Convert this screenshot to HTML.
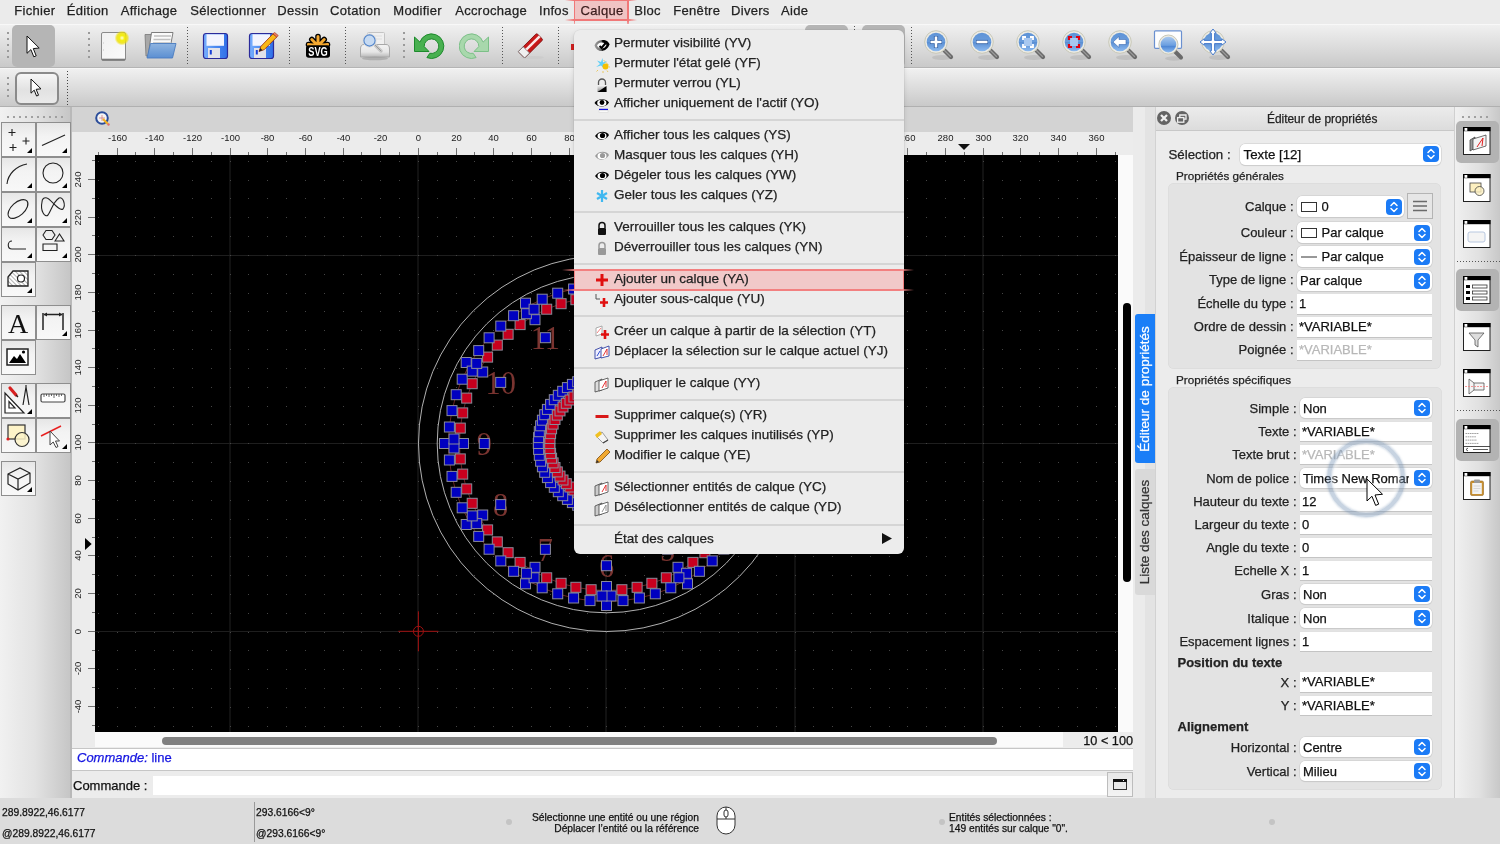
<!DOCTYPE html><html><head><meta charset="utf-8"><style>
*{margin:0;padding:0;box-sizing:border-box}
html,body{width:1500px;height:844px;overflow:hidden;background:#ececec;font-family:"Liberation Sans",sans-serif;color:#1e1e1e;-webkit-text-stroke-width:0.25px}
.a{position:absolute}
.t{position:absolute;white-space:nowrap;line-height:1}
.menubar span{position:absolute;top:3.3px;font-size:13px;line-height:15px;color:#222;letter-spacing:.3px}
.menubar span.hl{color:#3a1c1c}
.tb{background:linear-gradient(#f0f0f0,#d9d9d9 60%,#c9c9c9)}
.vdots{position:absolute;width:2px;background:repeating-linear-gradient(#9a9a9a 0 2px,transparent 2px 6px)}
.hdots{position:absolute;height:2px;background:repeating-linear-gradient(90deg,#a0a0a0 0 2px,transparent 2px 6px)}
.tbtn{position:absolute;width:34px;height:34px;border:1.5px solid #8e8e8e;background:linear-gradient(#e6e6e6,#f3f3f3 40%,#f8f8f8)}
.tbtn svg{position:absolute;left:0;top:0}
.tri{position:absolute;right:3px;bottom:3.5px;width:0;height:0;border-left:5px solid transparent;border-bottom:5px solid #000}
.lbl{position:absolute;font-size:13px;line-height:15px;text-align:right;white-space:nowrap;color:#222}
.fld{position:absolute;background:#fff;box-shadow:0 1px 0 #c4c4c4, 0 -0.5px 0 #e0e0e0;font-size:13px;line-height:19px;padding-left:2px;white-space:nowrap;overflow:hidden;color:#111}
.cmb{position:absolute;background:#fff;border-radius:5px;box-shadow:0 0 0 0.5px #c9c9c9,0 1px 1px rgba(0,0,0,.12);font-size:13px;line-height:21px;padding-left:5px;white-space:nowrap;overflow:hidden;color:#111}
.stp{position:absolute;right:2px;top:3px;width:16px;height:15px;border-radius:4px;background:#1a7cf5}
.stp svg{position:absolute;left:0;top:0}
.mi{position:absolute;left:40px;font-size:13.5px;line-height:16px;white-space:nowrap;color:#222}
.msep{position:absolute;left:0;width:330px;height:2px;background:#d6d6d6}
.mic{position:absolute;left:20px;width:16px;height:16px}
</style></head><body><div id="root" style="position:absolute;left:0;top:0;width:1500px;height:844px;will-change:transform;overflow:hidden">
<div class="a menubar" style="left:0;top:0;width:1500px;height:24px;background:#ebebeb">
<div class="a" style="left:574px;top:0;width:54px;height:20px;background:#f0c4c4"></div>
<span style="left:14.3px">Fichier</span>
<span style="left:66.7px">Édition</span>
<span style="left:120.7px">Affichage</span>
<span style="left:190.3px">Sélectionner</span>
<span style="left:277.3px">Dessin</span>
<span style="left:330px">Cotation</span>
<span style="left:393.3px">Modifier</span>
<span style="left:455.3px">Accrochage</span>
<span style="left:539px">Infos</span>
<span class="hl" style="left:580.5px">Calque</span>
<span style="left:634.3px">Bloc</span>
<span style="left:673.3px">Fenêtre</span>
<span style="left:731px">Divers</span>
<span style="left:781px">Aide</span>
</div>
<div class="a" style="left:565px;top:19px;width:72px;height:1.5px;background:linear-gradient(90deg,rgba(240,100,100,0),#f07878 12%,#f07878 88%,rgba(240,100,100,0))"></div>
<div class="a" style="left:565px;top:0;width:72px;height:1px;background:linear-gradient(90deg,rgba(240,100,100,0),#f07878 12%,#f07878 88%,rgba(240,100,100,0))"></div>
<div class="a" style="left:573.5px;top:0;width:1.5px;height:28px;background:linear-gradient(#f07878 75%,rgba(240,120,120,0))"></div>
<div class="a" style="left:627px;top:0;width:1.5px;height:28px;background:linear-gradient(#f07878 75%,rgba(240,120,120,0))"></div>
<div class="a tb" style="left:0;top:24px;width:1500px;height:44px;border-top:1px solid #f8f8f8;border-bottom:1px solid #b4b4b4"></div>
<div class="a tb" style="left:0;top:68px;width:1500px;height:39px;border-top:1px solid #f6f6f6;border-bottom:1px solid #b0b0b0"></div>
<div class="vdots" style="left:7px;top:32px;height:26px"></div>
<div class="a" style="left:12px;top:25px;width:43px;height:42px;border-radius:5px;background:#b5b5b5"></div>
<svg class="a" style="left:26px;top:34.5px" width="17" height="25"><g transform="translate(1,1) scale(1.0)"><path d="M0,0 L0,17.3 L3.9,13.6 L6.8,20.8 L9.2,19.8 L6.3,12.6 L12.2,12 Z" fill="#fff" stroke="#111" stroke-width="1.0" stroke-linejoin="round"/></g></svg>
<div class="vdots" style="left:88px;top:32px;height:26px"></div>
<svg class="a" style="left:98px;top:30px" width="32" height="32" viewBox="0 0 32 32"><defs><radialGradient id="glow"><stop offset="0" stop-color="#ffffe0"/><stop offset=".35" stop-color="#f4ee10"/><stop offset=".7" stop-color="#eee000" stop-opacity=".8"/><stop offset="1" stop-color="#f0e000" stop-opacity="0"/></radialGradient><linearGradient id="pg" x1="0" y1="0" x2="1" y2="1"><stop offset="0" stop-color="#f0f0f0"/><stop offset="1" stop-color="#fbfbfb"/></linearGradient></defs><rect x="3.5" y="2.5" width="24" height="28" rx="1.5" fill="url(#pg)" stroke="#8a8a8a" stroke-width="1"/><path d="M4,29.5 L27,29.5" stroke="#7a7a7a" stroke-width="1.6"/><path d="M5,13 L6,13 M5,20 L6,20" stroke="#bbb" stroke-width=".8"/><circle cx="24" cy="8" r="7.5" fill="url(#glow)"/></svg>
<svg class="a" style="left:142px;top:30px" width="36" height="32" viewBox="0 0 36 32"><defs><linearGradient id="fb" x1="0" y1="0" x2="0" y2="1"><stop offset="0" stop-color="#8fb4e0"/><stop offset="1" stop-color="#5b8fd2"/></linearGradient></defs><path d="M3,4.5 L10,4.5 L10,26 L4,26 Z" fill="#a8a8a8" stroke="#777" stroke-width=".8"/><path d="M9.5,2.5 L31,2.5 L28.5,16 L6,27 Z" fill="#fafafa" stroke="#707070" stroke-width=".9"/><path d="M12,6 L29,6 M11.5,9.5 L28.5,9.5 M11,13 L28,13" stroke="#c0c0c0" stroke-width="1.4"/><path d="M8.5,13.5 L34,13.5 L30.5,28 L5,28 Z" fill="url(#fb)" stroke="#4a7cc0" stroke-width=".9"/></svg>
<div class="vdots" style="left:187px;top:27px;height:38px;background:repeating-linear-gradient(#555 0 1px,transparent 1px 3px);width:1px"></div>
<svg class="a" style="left:202px;top:32px" width="33" height="30" viewBox="0 0 33 30"><defs><linearGradient id="fl" x1="0" y1="0" x2="1" y2="0"><stop offset="0" stop-color="#78b0ff"/><stop offset=".5" stop-color="#4a88f0"/><stop offset="1" stop-color="#3070e8"/></linearGradient></defs><rect x="1.5" y="1.5" width="24" height="25" rx="2.5" fill="url(#fl)" stroke="#2a2a9a" stroke-width="1.2"/><rect x="4.5" y="2.3" width="17.5" height="11.5" fill="#f2f4fe"/><rect x="6" y="16" width="12" height="10" fill="#e2e2ea"/><rect x="7.8" y="18" width="2" height="4.5" fill="#1a40d8"/></svg>
<svg class="a" style="left:248px;top:32px" width="33" height="30" viewBox="0 0 33 30"><defs><linearGradient id="fl" x1="0" y1="0" x2="1" y2="0"><stop offset="0" stop-color="#78b0ff"/><stop offset=".5" stop-color="#4a88f0"/><stop offset="1" stop-color="#3070e8"/></linearGradient></defs><rect x="1.5" y="1.5" width="24" height="25" rx="2.5" fill="url(#fl)" stroke="#2a2a9a" stroke-width="1.2"/><rect x="4.5" y="2.3" width="17.5" height="11.5" fill="#f2f4fe"/><rect x="6" y="16" width="12" height="10" fill="#e2e2ea"/><rect x="7.8" y="18" width="2" height="4.5" fill="#1a40d8"/><path d="M11,19.5 L12.8,14.5 L25,1.8 L28.8,5 L16.3,17.6 Z" fill="#f8b818" stroke="#9a2a10" stroke-width=".8"/><path d="M25,1.8 L26.6,0.4 L30.3,3.6 L28.8,5 Z" fill="#f08060" stroke="#9a2a10" stroke-width=".6"/><path d="M11,19.5 L12.3,16 L14.6,18.3 Z" fill="#222"/></svg>
<div class="vdots" style="left:289px;top:27px;height:38px;background:repeating-linear-gradient(#555 0 1px,transparent 1px 3px);width:1px"></div>
<svg class="a" style="left:304px;top:30px" width="30" height="30" viewBox="0 0 30 30"><path d="M14,16 L14,6.5 M14,16 L7.8,9.5 M14,16 L20.2,9.5 M14,16 L4.5,14.5 M14,16 L23.5,14.5" stroke="#000" stroke-width="5.6" stroke-linecap="round"/><path d="M14,16 L14,6.5 M14,16 L7.8,9.5 M14,16 L20.2,9.5 M14,16 L4.5,14.5 M14,16 L23.5,14.5" stroke="#f4a830" stroke-width="3" stroke-linecap="round"/><path d="M3,14.5 L25,14.5" stroke="#f4a830" stroke-width="1.5"/><rect x="2" y="15.2" width="24" height="12.6" rx="2.8" fill="#000"/><text transform="translate(14 26) scale(.74 1)" x="0" y="0" font-family="Liberation Sans" font-weight="bold" font-size="12.5" fill="#fff" text-anchor="middle">SVG</text></svg>
<div class="vdots" style="left:345px;top:27px;height:38px;background:repeating-linear-gradient(#555 0 1px,transparent 1px 3px);width:1px"></div>
<svg class="a" style="left:359px;top:30px" width="32" height="32" viewBox="0 0 32 32"><defs><linearGradient id="pr" x1="0" y1="0" x2="0" y2="1"><stop offset="0" stop-color="#f4f4f4"/><stop offset=".6" stop-color="#e6e6e6"/><stop offset="1" stop-color="#b8b8b8"/></linearGradient></defs><rect x="8.5" y="2.5" width="17" height="14" rx="1" fill="#f0f0f0" stroke="#c4c4c4" stroke-width="1"/><path d="M14,6 L23,6 M14,9 L23,9" stroke="#ddd" stroke-width="1.2"/><path d="M1.5,19 Q1.5,14.5 5,14.5 L27,14.5 Q30.5,14.5 30.5,19 L30.5,27 L1.5,27 Z" fill="url(#pr)" stroke="#a8a8a8" stroke-width="1"/><ellipse cx="16" cy="28.5" rx="13" ry="1.8" fill="#888" opacity=".45"/><path d="M15,14 L22,21" stroke="#c8c8c8" stroke-width="3.6" stroke-linecap="round"/><path d="M15,14 L22,21" stroke="#9a9a9a" stroke-width="1" stroke-linecap="round"/><circle cx="10.5" cy="10.5" r="6.6" fill="#f0f0f0" stroke="#ddd" stroke-width="1"/><circle cx="10.5" cy="10.5" r="5.6" fill="#c6daf2" stroke="#4f82c8" stroke-width="1.1"/></svg>
<div class="vdots" style="left:403px;top:32px;height:26px"></div>
<svg class="a" style="left:413px;top:31px" width="32" height="30" viewBox="0 0 32 30"><path d="M13.9,26.6 A12.3,12.3 0 1 0 6.9,11.1 L1.5,6 L1.5,20.5 L16,20.5 L11.2,15.6 A7.3,7.3 0 1 1 16.8,22.3 Z" fill="#48b050" stroke="#1d8a2c" stroke-width="1" stroke-linejoin="miter"/></svg>
<svg class="a" style="left:459px;top:31px" width="32" height="30" viewBox="0 0 32 30"><g transform="translate(31,0) scale(-1,1)"><path d="M13.9,26.6 A12.3,12.3 0 1 0 6.9,11.1 L1.5,6 L1.5,20.5 L16,20.5 L11.2,15.6 A7.3,7.3 0 1 1 16.8,22.3 Z" fill="#a8d8ac" stroke="#7cc088" stroke-width="1" stroke-linejoin="miter"/></g></svg>
<div class="vdots" style="left:502px;top:27px;height:38px;background:repeating-linear-gradient(#555 0 1px,transparent 1px 3px);width:1px"></div>
<svg class="a" style="left:515px;top:30px" width="32" height="32" viewBox="0 0 32 32"><ellipse cx="17" cy="27.5" rx="12" ry="1.6" fill="#ccc"/><g transform="rotate(-45 16 16)"><rect x="3" y="11" width="26" height="9" rx="1.5" fill="#c81818" stroke="#7a1010" stroke-width=".8"/><rect x="3" y="11" width="7" height="9" fill="#f0f0f0" stroke="#777" stroke-width=".8"/><rect x="10" y="14" width="19" height="2.5" fill="#fff" opacity=".9"/></g></svg>
<div class="vdots" style="left:558px;top:27px;height:38px;background:repeating-linear-gradient(#555 0 1px,transparent 1px 3px);width:1px"></div>
<div class="a" style="left:571px;top:44px;width:3px;height:6px;background:#d02020"></div>
<div class="a" style="left:805px;top:25px;width:43px;height:30px;border-radius:5px;background:#b5b5b5"></div>
<div class="a" style="left:862px;top:25px;width:43px;height:42px;border-radius:5px;background:#b5b5b5"></div>
<div class="a" style="left:854px;top:26px;width:1px;height:4px;background:repeating-linear-gradient(#555 0 1px,transparent 1px 3px)"></div>
<div class="vdots" style="left:911px;top:27px;height:38px;background:repeating-linear-gradient(#555 0 1px,transparent 1px 3px);width:1px"></div>
<svg class="a" style="left:920px;top:28px" width="36" height="34" viewBox="0 0 36 34"><defs><linearGradient id="bl" x1="0" y1="0" x2="0" y2="1"><stop offset="0" stop-color="#5e93d6"/><stop offset=".5" stop-color="#6a9ddc"/><stop offset=".52" stop-color="#5b8fd3"/><stop offset="1" stop-color="#8cbaf0"/></linearGradient></defs><ellipse cx="22" cy="29.5" rx="10" ry="2.5" fill="#999" opacity=".3"/><path d="M22.5,20.5 L31,29" stroke="#6a6a6a" stroke-width="4.2" stroke-linecap="round"/><path d="M23,21 L30.5,28.5" stroke="#9a9a9a" stroke-width="1.2" stroke-linecap="round"/><circle cx="16" cy="14" r="11.3" fill="#ecebe4" stroke="#c8c8b8" stroke-width="1"/><circle cx="16" cy="14" r="9.3" fill="url(#bl)"/><path d="M16,8 L16,20 M10,14 L22,14" stroke="#2a5aa0" stroke-width="4.2"/><path d="M16,8.5 L16,19.5 M10.5,14 L21.5,14" stroke="#fff" stroke-width="2.6"/></svg>
<svg class="a" style="left:966px;top:28px" width="36" height="34" viewBox="0 0 36 34"><defs><linearGradient id="bl" x1="0" y1="0" x2="0" y2="1"><stop offset="0" stop-color="#5e93d6"/><stop offset=".5" stop-color="#6a9ddc"/><stop offset=".52" stop-color="#5b8fd3"/><stop offset="1" stop-color="#8cbaf0"/></linearGradient></defs><ellipse cx="22" cy="29.5" rx="10" ry="2.5" fill="#999" opacity=".3"/><path d="M22.5,20.5 L31,29" stroke="#6a6a6a" stroke-width="4.2" stroke-linecap="round"/><path d="M23,21 L30.5,28.5" stroke="#9a9a9a" stroke-width="1.2" stroke-linecap="round"/><circle cx="16" cy="14" r="11.3" fill="#ecebe4" stroke="#c8c8b8" stroke-width="1"/><circle cx="16" cy="14" r="9.3" fill="url(#bl)"/><path d="M10,14 L22,14" stroke="#2a5aa0" stroke-width="4.2"/><path d="M10.5,14 L21.5,14" stroke="#fff" stroke-width="2.6"/></svg>
<svg class="a" style="left:1012px;top:28px" width="36" height="34" viewBox="0 0 36 34"><defs><linearGradient id="bl" x1="0" y1="0" x2="0" y2="1"><stop offset="0" stop-color="#5e93d6"/><stop offset=".5" stop-color="#6a9ddc"/><stop offset=".52" stop-color="#5b8fd3"/><stop offset="1" stop-color="#8cbaf0"/></linearGradient></defs><ellipse cx="22" cy="29.5" rx="10" ry="2.5" fill="#999" opacity=".3"/><path d="M22.5,20.5 L31,29" stroke="#6a6a6a" stroke-width="4.2" stroke-linecap="round"/><path d="M23,21 L30.5,28.5" stroke="#9a9a9a" stroke-width="1.2" stroke-linecap="round"/><circle cx="16" cy="14" r="11.3" fill="#ecebe4" stroke="#c8c8b8" stroke-width="1"/><circle cx="16" cy="14" r="9.3" fill="url(#bl)"/><rect x="12" y="10" width="8" height="8" fill="#a8c8f0"/><path d="M11,12 L11,9 L14,9 M18,9 L21,9 L21,12 M21,16 L21,19 L18,19 M14,19 L11,19 L11,16" stroke="#fff" stroke-width="1.8" fill="none"/></svg>
<svg class="a" style="left:1058px;top:28px" width="36" height="34" viewBox="0 0 36 34"><defs><linearGradient id="bl" x1="0" y1="0" x2="0" y2="1"><stop offset="0" stop-color="#5e93d6"/><stop offset=".5" stop-color="#6a9ddc"/><stop offset=".52" stop-color="#5b8fd3"/><stop offset="1" stop-color="#8cbaf0"/></linearGradient></defs><ellipse cx="22" cy="29.5" rx="10" ry="2.5" fill="#999" opacity=".3"/><path d="M22.5,20.5 L31,29" stroke="#6a6a6a" stroke-width="4.2" stroke-linecap="round"/><path d="M23,21 L30.5,28.5" stroke="#9a9a9a" stroke-width="1.2" stroke-linecap="round"/><circle cx="16" cy="14" r="11.3" fill="#ecebe4" stroke="#c8c8b8" stroke-width="1"/><circle cx="16" cy="14" r="9.3" fill="url(#bl)"/><rect x="12" y="10" width="8" height="8" fill="#a8c8f0"/><path d="M11,12 L11,9 L14,9 M18,9 L21,9 L21,12 M21,16 L21,19 L18,19 M14,19 L11,19 L11,16" stroke="#e00010" stroke-width="2.2" fill="none"/></svg>
<svg class="a" style="left:1104px;top:28px" width="36" height="34" viewBox="0 0 36 34"><defs><linearGradient id="bl" x1="0" y1="0" x2="0" y2="1"><stop offset="0" stop-color="#5e93d6"/><stop offset=".5" stop-color="#6a9ddc"/><stop offset=".52" stop-color="#5b8fd3"/><stop offset="1" stop-color="#8cbaf0"/></linearGradient></defs><ellipse cx="22" cy="29.5" rx="10" ry="2.5" fill="#999" opacity=".3"/><path d="M22.5,20.5 L31,29" stroke="#6a6a6a" stroke-width="4.2" stroke-linecap="round"/><path d="M23,21 L30.5,28.5" stroke="#9a9a9a" stroke-width="1.2" stroke-linecap="round"/><circle cx="16" cy="14" r="11.3" fill="#ecebe4" stroke="#c8c8b8" stroke-width="1"/><circle cx="16" cy="14" r="9.3" fill="url(#bl)"/><path d="M9,14 L15,8.5 L15,11.5 L22,11.5 L22,16.5 L15,16.5 L15,19.5 Z" fill="#fff" stroke="#3a6ab0" stroke-width=".6"/></svg>
<svg class="a" style="left:1152px;top:29px" width="34" height="34" viewBox="0 0 34 34"><defs><linearGradient id="bl2" x1="0" y1="0" x2="0" y2="1"><stop offset="0" stop-color="#a8c8ee"/><stop offset=".55" stop-color="#6a9ee0"/><stop offset=".6" stop-color="#4d86d4"/><stop offset="1" stop-color="#8cbaf0"/></linearGradient></defs><rect x="2.5" y="1.8" width="27" height="17.5" rx="1" fill="#fefefe" stroke="#6a90d0" stroke-width="1.2"/><ellipse cx="22" cy="29.5" rx="9" ry="2.2" fill="#999" opacity=".3"/><path d="M22,21.5 L29,28.5" stroke="#6a6a6a" stroke-width="4" stroke-linecap="round"/><circle cx="16.4" cy="15.6" r="9.6" fill="#ecebe4" stroke="#c8c8b8" stroke-width="1"/><circle cx="16.4" cy="15.6" r="7.8" fill="url(#bl2)"/></svg>
<svg class="a" style="left:1197px;top:28px" width="36" height="34" viewBox="0 0 36 34"><defs><linearGradient id="bl" x1="0" y1="0" x2="0" y2="1"><stop offset="0" stop-color="#5e93d6"/><stop offset=".5" stop-color="#6a9ddc"/><stop offset=".52" stop-color="#5b8fd3"/><stop offset="1" stop-color="#8cbaf0"/></linearGradient></defs><ellipse cx="22" cy="29.5" rx="10" ry="2.5" fill="#999" opacity=".3"/><path d="M22.5,20.5 L31,29" stroke="#6a6a6a" stroke-width="4.2" stroke-linecap="round"/><path d="M23,21 L30.5,28.5" stroke="#9a9a9a" stroke-width="1.2" stroke-linecap="round"/><circle cx="16" cy="14" r="11.3" fill="#ecebe4" stroke="#c8c8b8" stroke-width="1"/><circle cx="16" cy="14" r="9.3" fill="url(#bl)"/><path d="M16,1 L19.2,5.2 L17.6,5.2 L17.6,12.4 L24.8,12.4 L24.8,10.8 L29,14 L24.8,17.2 L24.8,15.6 L17.6,15.6 L17.6,22.8 L19.2,22.8 L16,27 L12.8,22.8 L14.4,22.8 L14.4,15.6 L7.2,15.6 L7.2,17.2 L3,14 L7.2,10.8 L7.2,12.4 L14.4,12.4 L14.4,5.2 L12.8,5.2 Z" fill="#fff" stroke="#3a72c8" stroke-width=".9" stroke-linejoin="miter"/></svg>
<div class="vdots" style="left:7px;top:77px;height:20px"></div>
<div class="a" style="left:14.5px;top:72px;width:44px;height:32.5px;border-radius:6px;border:2px solid #8a8a8a;background:linear-gradient(#f6f6f6,#e2e2e2 55%,#eaeaea)"></div>
<svg class="a" style="left:30px;top:78px" width="14" height="21"><g transform="translate(1,1) scale(0.82)"><path d="M0,0 L0,17.3 L3.9,13.6 L6.8,20.8 L9.2,19.8 L6.3,12.6 L12.2,12 Z" fill="#fff" stroke="#111" stroke-width="1.2195121951219512" stroke-linejoin="round"/></g></svg>
<div class="a" style="left:67px;top:71px;width:1px;height:34px;background:repeating-linear-gradient(#444 0 1px,transparent 1px 3px)"></div>
<div class="a" style="left:0;top:107px;width:70px;height:691px;background:linear-gradient(90deg,#f1f1f1,#e2e2e2 50%,#c6c6c6)"></div>
<div class="a" style="left:70px;top:107px;width:2px;height:691px;background:#b9b9b9"></div>
<div class="hdots" style="left:7px;top:116px;width:58px"></div>
<div class="tbtn" style="left:1px;top:122px;width:35px;height:35px"><svg width="32" height="32" viewBox="0 0 32 32"><path d="M10,6 L10,13 M6.5,9.5 L13.5,9.5 M24,14.5 L24,21.5 M20.5,18 L27.5,18 M11,21 L11,28 M7.5,24.5 L14.5,24.5" stroke="#222" stroke-width="1.1" fill="none"/></svg><div class="tri"></div></div>
<div class="tbtn" style="left:36px;top:122px;width:35px;height:35px"><svg width="32" height="32" viewBox="0 0 32 32"><path d="M5,22.5 L28,12" stroke="#222" stroke-width="1.1" fill="none"/></svg><div class="tri"></div></div>
<div class="tbtn" style="left:1px;top:157px;width:35px;height:35px"><svg width="32" height="32" viewBox="0 0 32 32"><path d="M5,26 C6,16 14,8 25,6" stroke="#222" stroke-width="1.1" fill="none"/></svg><div class="tri"></div></div>
<div class="tbtn" style="left:36px;top:157px;width:35px;height:35px"><svg width="32" height="32" viewBox="0 0 32 32"><circle cx="16" cy="15" r="10" stroke="#222" stroke-width="1.1" fill="none"/></svg><div class="tri"></div></div>
<div class="tbtn" style="left:1px;top:192px;width:35px;height:35px"><svg width="32" height="32" viewBox="0 0 32 32"><ellipse cx="16" cy="16" rx="12" ry="6.5" transform="rotate(-42 16 16)" stroke="#222" stroke-width="1.1" fill="none"/></svg><div class="tri"></div></div>
<div class="tbtn" style="left:36px;top:192px;width:35px;height:35px"><svg width="32" height="32" viewBox="0 0 32 32"><path d="M5,9 C3,18 8,25 11,22 C14,18 16,9 22,5 C26,3 29,12 26,16 C22,19 14,6 10,5 C7,4 5,6 5,9 Z" stroke="#222" stroke-width="1.1" fill="none"/></svg><div class="tri"></div></div>
<div class="tbtn" style="left:1px;top:227px;width:35px;height:35px"><svg width="32" height="32" viewBox="0 0 32 32"><path d="M10,13 C5,13 5,21 10,21 L24,21" stroke="#222" stroke-width="1.1" fill="none"/></svg><div class="tri"></div></div>
<div class="tbtn" style="left:36px;top:227px;width:35px;height:35px"><svg width="32" height="32" viewBox="0 0 32 32"><path d="M6,7 L9,2.5 L15,2.5 L18,7 L15,11.5 L9,11.5 Z M18,13 L22.5,6 L27,13 Z M6,16 L20,16 L20,22.5 L6,22.5 Z" stroke="#222" stroke-width="1.1" fill="none"/></svg><div class="tri"></div></div>
<div class="tbtn" style="left:1px;top:262px;width:35px;height:35px"><svg width="32" height="32" viewBox="0 0 32 32"><defs><pattern id="hat" width="3" height="3" patternUnits="userSpaceOnUse" patternTransform="rotate(-45)"><rect width="3" height="3" fill="#fff"/><path d="M0,0 L0,3" stroke="#666" stroke-width="1"/></pattern></defs><path d="M6,23 L6,14 L11,8 L26,8 L26,23 Z" fill="url(#hat)" stroke="#222" stroke-width="1.3"/><circle cx="19" cy="15.5" r="3.5" fill="#fff" stroke="#222" stroke-width="1.2"/></svg><div class="tri"></div></div>
<div class="tbtn" style="left:1px;top:305px;width:35px;height:35px"><svg width="32" height="32" viewBox="0 0 32 32"><text x="16" y="27" font-family="Liberation Serif" font-size="28" text-anchor="middle" fill="#111">A</text></svg></div>
<div class="tbtn" style="left:36px;top:305px;width:35px;height:35px"><svg width="32" height="32" viewBox="0 0 32 32"><path d="M6,7 L6,24 M26,7 L26,24 M7,8.5 L25,8.5" stroke="#222" stroke-width="1.5" fill="none"/><path d="M6.5,8.5 L10,6.5 L10,10.5Z M25.5,8.5 L22,6.5 L22,10.5Z" fill="#222"/></svg><div class="tri"></div></div>
<div class="tbtn" style="left:1px;top:340px;width:35px;height:35px"><svg width="32" height="32" viewBox="0 0 32 32"><rect x="5" y="8" width="21" height="16" fill="#fff" stroke="#222" stroke-width="1.5"/><path d="M7,22 L12,15 L15,18 L18,13 L24,22 Z" fill="#000"/><circle cx="21.5" cy="11" r="1.6" fill="#000"/></svg></div>
<div class="tbtn" style="left:1px;top:383px;width:35px;height:35px"><svg width="32" height="32" viewBox="0 0 32 32"><path d="M3,29 L3,9 L22,29 Z M7,24 L7,17.5 L13,24 Z" stroke="#222" stroke-width="1.2" fill="#fff"/><path d="M8,4 L14,11" stroke="#d82020" stroke-width="3.2" stroke-linecap="round"/><path d="M14,11 L16,13" stroke="#222" stroke-width="1.2"/><path d="M24,3 L21,21 M24,3 L27,21 M24,3 L24,1" stroke="#222" stroke-width="1.2" fill="none"/></svg><div class="tri"></div></div>
<div class="tbtn" style="left:36px;top:383px;width:35px;height:35px"><svg width="32" height="32" viewBox="0 0 32 32"><rect x="4" y="10" width="24" height="8" rx="1.5" fill="#fff" stroke="#444" stroke-width="1.2"/><path d="M7,10 L7,13 M9.5,10 L9.5,12 M12,10 L12,13 M14.5,10 L14.5,12 M17,10 L17,14 M19.5,10 L19.5,12 M22,10 L22,13 M24.5,10 L24.5,12" stroke="#444" stroke-width=".8"/></svg></div>
<div class="tbtn" style="left:1px;top:418px;width:35px;height:35px"><svg width="32" height="32" viewBox="0 0 32 32"><rect x="6" y="6" width="17" height="14" fill="#fdf3c8" stroke="#333" stroke-width="1.2"/><circle cx="20" cy="20.5" r="7" fill="#fdf3c8" fill-opacity=".85" stroke="#333" stroke-width="1.2"/><circle cx="6" cy="20" r="1.6" fill="#e02020"/></svg></div>
<div class="tbtn" style="left:36px;top:418px;width:35px;height:35px"><svg width="32" height="32" viewBox="0 0 32 32"><path d="M4,17 L24,7" stroke="#e82020" stroke-width="1.4"/><path d="M13,12 L13,26 L16.2,23 L19,28.5 L21,27.5 L18.5,22 L22.5,22 Z" fill="#fff" stroke="#444" stroke-width="1"/></svg><div class="tri"></div></div>
<div class="tbtn" style="left:1px;top:461px;width:35px;height:35px"><svg width="32" height="32" viewBox="0 0 32 32"><path d="M6,12 L18,6 L28,11 L28,21 L16,28 L6,22 Z M6,12 L16,17 L28,11 M16,17 L16,28" stroke="#222" stroke-width="1.2" fill="none"/></svg><div class="tri"></div></div>
<div class="a" style="left:72px;top:107px;width:1062px;height:24.5px;background:#d3d3d3"></div>
<svg class="a" style="left:95px;top:111px" width="16" height="16" viewBox="0 0 16 16"><circle cx="7" cy="7" r="5.8" fill="#f4f4f4" stroke="#2b4d9a" stroke-width="2"/><path d="M4,7 L10,7 M7,4 L7,10" stroke="#d07070" stroke-width=".7"/><path d="M8,8 L13,13" stroke="#f0b020" stroke-width="2.2"/><circle cx="13.5" cy="13.5" r="1.2" fill="#e07070"/></svg>
<div class="a" style="left:72px;top:131.5px;width:1061px;height:23.5px;background:#ececec"></div>
<div class="a" style="left:72px;top:155px;width:23px;height:577px;background:#ececec"></div>
<svg class="a" style="left:95px;top:131px" width="1023" height="24" viewBox="0 0 1023 24"><path d="M3.50,21 L3.50,24" stroke="#707070" stroke-width="1"/><path d="M22.50,17 L22.50,24" stroke="#707070" stroke-width="1"/><text x="22.50" y="10" font-family="Liberation Sans" font-size="9.5" text-anchor="middle" fill="#222">-160</text><path d="M40.50,21 L40.50,24" stroke="#707070" stroke-width="1"/><path d="M59.50,17 L59.50,24" stroke="#707070" stroke-width="1"/><text x="59.50" y="10" font-family="Liberation Sans" font-size="9.5" text-anchor="middle" fill="#222">-140</text><path d="M78.50,21 L78.50,24" stroke="#707070" stroke-width="1"/><path d="M97.50,17 L97.50,24" stroke="#707070" stroke-width="1"/><text x="97.50" y="10" font-family="Liberation Sans" font-size="9.5" text-anchor="middle" fill="#222">-120</text><path d="M116.50,21 L116.50,24" stroke="#707070" stroke-width="1"/><path d="M135.50,17 L135.50,24" stroke="#707070" stroke-width="1"/><text x="135.50" y="10" font-family="Liberation Sans" font-size="9.5" text-anchor="middle" fill="#222">-100</text><path d="M153.50,21 L153.50,24" stroke="#707070" stroke-width="1"/><path d="M172.50,17 L172.50,24" stroke="#707070" stroke-width="1"/><text x="172.50" y="10" font-family="Liberation Sans" font-size="9.5" text-anchor="middle" fill="#222">-80</text><path d="M191.50,21 L191.50,24" stroke="#707070" stroke-width="1"/><path d="M210.50,17 L210.50,24" stroke="#707070" stroke-width="1"/><text x="210.50" y="10" font-family="Liberation Sans" font-size="9.5" text-anchor="middle" fill="#222">-60</text><path d="M229.50,21 L229.50,24" stroke="#707070" stroke-width="1"/><path d="M248.50,17 L248.50,24" stroke="#707070" stroke-width="1"/><text x="248.50" y="10" font-family="Liberation Sans" font-size="9.5" text-anchor="middle" fill="#222">-40</text><path d="M266.50,21 L266.50,24" stroke="#707070" stroke-width="1"/><path d="M285.50,17 L285.50,24" stroke="#707070" stroke-width="1"/><text x="285.50" y="10" font-family="Liberation Sans" font-size="9.5" text-anchor="middle" fill="#222">-20</text><path d="M304.50,21 L304.50,24" stroke="#707070" stroke-width="1"/><path d="M323.50,17 L323.50,24" stroke="#707070" stroke-width="1"/><text x="323.50" y="10" font-family="Liberation Sans" font-size="9.5" text-anchor="middle" fill="#222">0</text><path d="M342.50,21 L342.50,24" stroke="#707070" stroke-width="1"/><path d="M361.50,17 L361.50,24" stroke="#707070" stroke-width="1"/><text x="361.50" y="10" font-family="Liberation Sans" font-size="9.5" text-anchor="middle" fill="#222">20</text><path d="M379.50,21 L379.50,24" stroke="#707070" stroke-width="1"/><path d="M398.50,17 L398.50,24" stroke="#707070" stroke-width="1"/><text x="398.50" y="10" font-family="Liberation Sans" font-size="9.5" text-anchor="middle" fill="#222">40</text><path d="M417.50,21 L417.50,24" stroke="#707070" stroke-width="1"/><path d="M436.50,17 L436.50,24" stroke="#707070" stroke-width="1"/><text x="436.50" y="10" font-family="Liberation Sans" font-size="9.5" text-anchor="middle" fill="#222">60</text><path d="M455.50,21 L455.50,24" stroke="#707070" stroke-width="1"/><path d="M474.50,17 L474.50,24" stroke="#707070" stroke-width="1"/><text x="474.50" y="10" font-family="Liberation Sans" font-size="9.5" text-anchor="middle" fill="#222">80</text><path d="M492.50,21 L492.50,24" stroke="#707070" stroke-width="1"/><path d="M511.50,17 L511.50,24" stroke="#707070" stroke-width="1"/><text x="511.50" y="10" font-family="Liberation Sans" font-size="9.5" text-anchor="middle" fill="#222">100</text><path d="M530.50,21 L530.50,24" stroke="#707070" stroke-width="1"/><path d="M549.50,17 L549.50,24" stroke="#707070" stroke-width="1"/><text x="549.50" y="10" font-family="Liberation Sans" font-size="9.5" text-anchor="middle" fill="#222">120</text><path d="M568.50,21 L568.50,24" stroke="#707070" stroke-width="1"/><path d="M587.50,17 L587.50,24" stroke="#707070" stroke-width="1"/><text x="587.50" y="10" font-family="Liberation Sans" font-size="9.5" text-anchor="middle" fill="#222">140</text><path d="M605.50,21 L605.50,24" stroke="#707070" stroke-width="1"/><path d="M624.50,17 L624.50,24" stroke="#707070" stroke-width="1"/><text x="624.50" y="10" font-family="Liberation Sans" font-size="9.5" text-anchor="middle" fill="#222">160</text><path d="M643.50,21 L643.50,24" stroke="#707070" stroke-width="1"/><path d="M662.50,17 L662.50,24" stroke="#707070" stroke-width="1"/><text x="662.50" y="10" font-family="Liberation Sans" font-size="9.5" text-anchor="middle" fill="#222">180</text><path d="M681.50,21 L681.50,24" stroke="#707070" stroke-width="1"/><path d="M700.50,17 L700.50,24" stroke="#707070" stroke-width="1"/><text x="700.50" y="10" font-family="Liberation Sans" font-size="9.5" text-anchor="middle" fill="#222">200</text><path d="M718.50,21 L718.50,24" stroke="#707070" stroke-width="1"/><path d="M737.50,17 L737.50,24" stroke="#707070" stroke-width="1"/><text x="737.50" y="10" font-family="Liberation Sans" font-size="9.5" text-anchor="middle" fill="#222">220</text><path d="M756.50,21 L756.50,24" stroke="#707070" stroke-width="1"/><path d="M775.50,17 L775.50,24" stroke="#707070" stroke-width="1"/><text x="775.50" y="10" font-family="Liberation Sans" font-size="9.5" text-anchor="middle" fill="#222">240</text><path d="M794.50,21 L794.50,24" stroke="#707070" stroke-width="1"/><path d="M812.50,17 L812.50,24" stroke="#707070" stroke-width="1"/><text x="812.50" y="10" font-family="Liberation Sans" font-size="9.5" text-anchor="middle" fill="#222">260</text><path d="M831.50,21 L831.50,24" stroke="#707070" stroke-width="1"/><path d="M850.50,17 L850.50,24" stroke="#707070" stroke-width="1"/><text x="850.50" y="10" font-family="Liberation Sans" font-size="9.5" text-anchor="middle" fill="#222">280</text><path d="M869.50,21 L869.50,24" stroke="#707070" stroke-width="1"/><path d="M888.50,17 L888.50,24" stroke="#707070" stroke-width="1"/><text x="888.50" y="10" font-family="Liberation Sans" font-size="9.5" text-anchor="middle" fill="#222">300</text><path d="M907.50,21 L907.50,24" stroke="#707070" stroke-width="1"/><path d="M925.50,17 L925.50,24" stroke="#707070" stroke-width="1"/><text x="925.50" y="10" font-family="Liberation Sans" font-size="9.5" text-anchor="middle" fill="#222">320</text><path d="M944.50,21 L944.50,24" stroke="#707070" stroke-width="1"/><path d="M963.50,17 L963.50,24" stroke="#707070" stroke-width="1"/><text x="963.50" y="10" font-family="Liberation Sans" font-size="9.5" text-anchor="middle" fill="#222">340</text><path d="M982.50,21 L982.50,24" stroke="#707070" stroke-width="1"/><path d="M1001.50,17 L1001.50,24" stroke="#707070" stroke-width="1"/><text x="1001.50" y="10" font-family="Liberation Sans" font-size="9.5" text-anchor="middle" fill="#222">360</text><path d="M1020.50,21 L1020.50,24" stroke="#707070" stroke-width="1"/></svg>
<svg class="a" style="left:958px;top:144px" width="12" height="7"><path d="M0,0 L12,0 L6,6 Z" fill="#111"/></svg>
<svg class="a" style="left:72px;top:155px" width="23" height="577" viewBox="0 0 23 577"><path d="M20,570.50 L23,570.50" stroke="#707070" stroke-width="1"/><path d="M16,551.50 L23,551.50" stroke="#707070" stroke-width="1"/><text transform="translate(8.7 551.50) rotate(-90)" x="0" y="0" font-family="Liberation Sans" font-size="9.5" text-anchor="middle" fill="#222">-40</text><path d="M20,532.50 L23,532.50" stroke="#707070" stroke-width="1"/><path d="M16,513.50 L23,513.50" stroke="#707070" stroke-width="1"/><text transform="translate(8.7 513.50) rotate(-90)" x="0" y="0" font-family="Liberation Sans" font-size="9.5" text-anchor="middle" fill="#222">-20</text><path d="M20,495.50 L23,495.50" stroke="#707070" stroke-width="1"/><path d="M16,476.50 L23,476.50" stroke="#707070" stroke-width="1"/><text transform="translate(8.7 476.50) rotate(-90)" x="0" y="0" font-family="Liberation Sans" font-size="9.5" text-anchor="middle" fill="#222">0</text><path d="M20,457.50 L23,457.50" stroke="#707070" stroke-width="1"/><path d="M16,438.50 L23,438.50" stroke="#707070" stroke-width="1"/><text transform="translate(8.7 438.50) rotate(-90)" x="0" y="0" font-family="Liberation Sans" font-size="9.5" text-anchor="middle" fill="#222">20</text><path d="M20,419.50 L23,419.50" stroke="#707070" stroke-width="1"/><path d="M16,400.50 L23,400.50" stroke="#707070" stroke-width="1"/><text transform="translate(8.7 400.50) rotate(-90)" x="0" y="0" font-family="Liberation Sans" font-size="9.5" text-anchor="middle" fill="#222">40</text><path d="M20,382.50 L23,382.50" stroke="#707070" stroke-width="1"/><path d="M16,363.50 L23,363.50" stroke="#707070" stroke-width="1"/><text transform="translate(8.7 363.50) rotate(-90)" x="0" y="0" font-family="Liberation Sans" font-size="9.5" text-anchor="middle" fill="#222">60</text><path d="M20,344.50 L23,344.50" stroke="#707070" stroke-width="1"/><path d="M16,325.50 L23,325.50" stroke="#707070" stroke-width="1"/><text transform="translate(8.7 325.50) rotate(-90)" x="0" y="0" font-family="Liberation Sans" font-size="9.5" text-anchor="middle" fill="#222">80</text><path d="M20,306.50 L23,306.50" stroke="#707070" stroke-width="1"/><path d="M16,287.50 L23,287.50" stroke="#707070" stroke-width="1"/><text transform="translate(8.7 287.50) rotate(-90)" x="0" y="0" font-family="Liberation Sans" font-size="9.5" text-anchor="middle" fill="#222">100</text><path d="M20,269.50 L23,269.50" stroke="#707070" stroke-width="1"/><path d="M16,250.50 L23,250.50" stroke="#707070" stroke-width="1"/><text transform="translate(8.7 250.50) rotate(-90)" x="0" y="0" font-family="Liberation Sans" font-size="9.5" text-anchor="middle" fill="#222">120</text><path d="M20,231.50 L23,231.50" stroke="#707070" stroke-width="1"/><path d="M16,212.50 L23,212.50" stroke="#707070" stroke-width="1"/><text transform="translate(8.7 212.50) rotate(-90)" x="0" y="0" font-family="Liberation Sans" font-size="9.5" text-anchor="middle" fill="#222">140</text><path d="M20,193.50 L23,193.50" stroke="#707070" stroke-width="1"/><path d="M16,175.50 L23,175.50" stroke="#707070" stroke-width="1"/><text transform="translate(8.7 175.50) rotate(-90)" x="0" y="0" font-family="Liberation Sans" font-size="9.5" text-anchor="middle" fill="#222">160</text><path d="M20,156.50 L23,156.50" stroke="#707070" stroke-width="1"/><path d="M16,137.50 L23,137.50" stroke="#707070" stroke-width="1"/><text transform="translate(8.7 137.50) rotate(-90)" x="0" y="0" font-family="Liberation Sans" font-size="9.5" text-anchor="middle" fill="#222">180</text><path d="M20,118.50 L23,118.50" stroke="#707070" stroke-width="1"/><path d="M16,99.50 L23,99.50" stroke="#707070" stroke-width="1"/><text transform="translate(8.7 99.50) rotate(-90)" x="0" y="0" font-family="Liberation Sans" font-size="9.5" text-anchor="middle" fill="#222">200</text><path d="M20,80.50 L23,80.50" stroke="#707070" stroke-width="1"/><path d="M16,62.50 L23,62.50" stroke="#707070" stroke-width="1"/><text transform="translate(8.7 62.50) rotate(-90)" x="0" y="0" font-family="Liberation Sans" font-size="9.5" text-anchor="middle" fill="#222">220</text><path d="M20,43.50 L23,43.50" stroke="#707070" stroke-width="1"/><path d="M16,24.50 L23,24.50" stroke="#707070" stroke-width="1"/><text transform="translate(8.7 24.50) rotate(-90)" x="0" y="0" font-family="Liberation Sans" font-size="9.5" text-anchor="middle" fill="#222">240</text><path d="M20,5.50 L23,5.50" stroke="#707070" stroke-width="1"/></svg>
<svg class="a" style="left:84.5px;top:537.8px" width="8" height="13"><path d="M0,0 L6.7,6.05 L0,12.1 Z" fill="#000"/></svg>
<svg class="a" style="left:95px;top:155px" width="1023" height="577" viewBox="0 0 1023 577"><rect width="1023" height="577" fill="#000"/><path d="M135.00,0 L135.00,577" stroke="#111" stroke-width="2"/><path d="M323.00,0 L323.00,577" stroke="#111" stroke-width="2"/><path d="M511.00,0 L511.00,577" stroke="#111" stroke-width="2"/><path d="M700.00,0 L700.00,577" stroke="#111" stroke-width="2"/><path d="M888.00,0 L888.00,577" stroke="#111" stroke-width="2"/><path d="M0,476.50 L1023,476.50" stroke="#1e1e1e" stroke-width="1"/><path d="M0,288.50 L1023,288.50" stroke="#1e1e1e" stroke-width="1"/><path d="M0,100.50 L1023,100.50" stroke="#1e1e1e" stroke-width="1"/><path d="M3.0,571.0h1v1h-1zM3.0,552.0h1v1h-1zM3.0,533.0h1v1h-1zM3.0,514.0h1v1h-1zM3.0,495.0h1v1h-1zM3.0,477.0h1v1h-1zM3.0,458.0h1v1h-1zM3.0,439.0h1v1h-1zM3.0,420.0h1v1h-1zM3.0,401.0h1v1h-1zM3.0,382.0h1v1h-1zM3.0,364.0h1v1h-1zM3.0,345.0h1v1h-1zM3.0,326.0h1v1h-1zM3.0,307.0h1v1h-1zM3.0,288.0h1v1h-1zM3.0,269.0h1v1h-1zM3.0,251.0h1v1h-1zM3.0,232.0h1v1h-1zM3.0,213.0h1v1h-1zM3.0,194.0h1v1h-1zM3.0,175.0h1v1h-1zM3.0,156.0h1v1h-1zM3.0,138.0h1v1h-1zM3.0,119.0h1v1h-1zM3.0,100.0h1v1h-1zM3.0,81.0h1v1h-1zM3.0,62.0h1v1h-1zM3.0,43.0h1v1h-1zM3.0,25.0h1v1h-1zM3.0,6.0h1v1h-1zM22.0,571.0h1v1h-1zM22.0,552.0h1v1h-1zM22.0,533.0h1v1h-1zM22.0,514.0h1v1h-1zM22.0,495.0h1v1h-1zM22.0,477.0h1v1h-1zM22.0,458.0h1v1h-1zM22.0,439.0h1v1h-1zM22.0,420.0h1v1h-1zM22.0,401.0h1v1h-1zM22.0,382.0h1v1h-1zM22.0,364.0h1v1h-1zM22.0,345.0h1v1h-1zM22.0,326.0h1v1h-1zM22.0,307.0h1v1h-1zM22.0,288.0h1v1h-1zM22.0,269.0h1v1h-1zM22.0,251.0h1v1h-1zM22.0,232.0h1v1h-1zM22.0,213.0h1v1h-1zM22.0,194.0h1v1h-1zM22.0,175.0h1v1h-1zM22.0,156.0h1v1h-1zM22.0,138.0h1v1h-1zM22.0,119.0h1v1h-1zM22.0,100.0h1v1h-1zM22.0,81.0h1v1h-1zM22.0,62.0h1v1h-1zM22.0,43.0h1v1h-1zM22.0,25.0h1v1h-1zM22.0,6.0h1v1h-1zM40.0,571.0h1v1h-1zM40.0,552.0h1v1h-1zM40.0,533.0h1v1h-1zM40.0,514.0h1v1h-1zM40.0,495.0h1v1h-1zM40.0,477.0h1v1h-1zM40.0,458.0h1v1h-1zM40.0,439.0h1v1h-1zM40.0,420.0h1v1h-1zM40.0,401.0h1v1h-1zM40.0,382.0h1v1h-1zM40.0,364.0h1v1h-1zM40.0,345.0h1v1h-1zM40.0,326.0h1v1h-1zM40.0,307.0h1v1h-1zM40.0,288.0h1v1h-1zM40.0,269.0h1v1h-1zM40.0,251.0h1v1h-1zM40.0,232.0h1v1h-1zM40.0,213.0h1v1h-1zM40.0,194.0h1v1h-1zM40.0,175.0h1v1h-1zM40.0,156.0h1v1h-1zM40.0,138.0h1v1h-1zM40.0,119.0h1v1h-1zM40.0,100.0h1v1h-1zM40.0,81.0h1v1h-1zM40.0,62.0h1v1h-1zM40.0,43.0h1v1h-1zM40.0,25.0h1v1h-1zM40.0,6.0h1v1h-1zM59.0,571.0h1v1h-1zM59.0,552.0h1v1h-1zM59.0,533.0h1v1h-1zM59.0,514.0h1v1h-1zM59.0,495.0h1v1h-1zM59.0,477.0h1v1h-1zM59.0,458.0h1v1h-1zM59.0,439.0h1v1h-1zM59.0,420.0h1v1h-1zM59.0,401.0h1v1h-1zM59.0,382.0h1v1h-1zM59.0,364.0h1v1h-1zM59.0,345.0h1v1h-1zM59.0,326.0h1v1h-1zM59.0,307.0h1v1h-1zM59.0,288.0h1v1h-1zM59.0,269.0h1v1h-1zM59.0,251.0h1v1h-1zM59.0,232.0h1v1h-1zM59.0,213.0h1v1h-1zM59.0,194.0h1v1h-1zM59.0,175.0h1v1h-1zM59.0,156.0h1v1h-1zM59.0,138.0h1v1h-1zM59.0,119.0h1v1h-1zM59.0,100.0h1v1h-1zM59.0,81.0h1v1h-1zM59.0,62.0h1v1h-1zM59.0,43.0h1v1h-1zM59.0,25.0h1v1h-1zM59.0,6.0h1v1h-1zM78.0,571.0h1v1h-1zM78.0,552.0h1v1h-1zM78.0,533.0h1v1h-1zM78.0,514.0h1v1h-1zM78.0,495.0h1v1h-1zM78.0,477.0h1v1h-1zM78.0,458.0h1v1h-1zM78.0,439.0h1v1h-1zM78.0,420.0h1v1h-1zM78.0,401.0h1v1h-1zM78.0,382.0h1v1h-1zM78.0,364.0h1v1h-1zM78.0,345.0h1v1h-1zM78.0,326.0h1v1h-1zM78.0,307.0h1v1h-1zM78.0,288.0h1v1h-1zM78.0,269.0h1v1h-1zM78.0,251.0h1v1h-1zM78.0,232.0h1v1h-1zM78.0,213.0h1v1h-1zM78.0,194.0h1v1h-1zM78.0,175.0h1v1h-1zM78.0,156.0h1v1h-1zM78.0,138.0h1v1h-1zM78.0,119.0h1v1h-1zM78.0,100.0h1v1h-1zM78.0,81.0h1v1h-1zM78.0,62.0h1v1h-1zM78.0,43.0h1v1h-1zM78.0,25.0h1v1h-1zM78.0,6.0h1v1h-1zM97.0,571.0h1v1h-1zM97.0,552.0h1v1h-1zM97.0,533.0h1v1h-1zM97.0,514.0h1v1h-1zM97.0,495.0h1v1h-1zM97.0,477.0h1v1h-1zM97.0,458.0h1v1h-1zM97.0,439.0h1v1h-1zM97.0,420.0h1v1h-1zM97.0,401.0h1v1h-1zM97.0,382.0h1v1h-1zM97.0,364.0h1v1h-1zM97.0,345.0h1v1h-1zM97.0,326.0h1v1h-1zM97.0,307.0h1v1h-1zM97.0,288.0h1v1h-1zM97.0,269.0h1v1h-1zM97.0,251.0h1v1h-1zM97.0,232.0h1v1h-1zM97.0,213.0h1v1h-1zM97.0,194.0h1v1h-1zM97.0,175.0h1v1h-1zM97.0,156.0h1v1h-1zM97.0,138.0h1v1h-1zM97.0,119.0h1v1h-1zM97.0,100.0h1v1h-1zM97.0,81.0h1v1h-1zM97.0,62.0h1v1h-1zM97.0,43.0h1v1h-1zM97.0,25.0h1v1h-1zM97.0,6.0h1v1h-1zM116.0,571.0h1v1h-1zM116.0,552.0h1v1h-1zM116.0,533.0h1v1h-1zM116.0,514.0h1v1h-1zM116.0,495.0h1v1h-1zM116.0,477.0h1v1h-1zM116.0,458.0h1v1h-1zM116.0,439.0h1v1h-1zM116.0,420.0h1v1h-1zM116.0,401.0h1v1h-1zM116.0,382.0h1v1h-1zM116.0,364.0h1v1h-1zM116.0,345.0h1v1h-1zM116.0,326.0h1v1h-1zM116.0,307.0h1v1h-1zM116.0,288.0h1v1h-1zM116.0,269.0h1v1h-1zM116.0,251.0h1v1h-1zM116.0,232.0h1v1h-1zM116.0,213.0h1v1h-1zM116.0,194.0h1v1h-1zM116.0,175.0h1v1h-1zM116.0,156.0h1v1h-1zM116.0,138.0h1v1h-1zM116.0,119.0h1v1h-1zM116.0,100.0h1v1h-1zM116.0,81.0h1v1h-1zM116.0,62.0h1v1h-1zM116.0,43.0h1v1h-1zM116.0,25.0h1v1h-1zM116.0,6.0h1v1h-1zM135.0,571.0h1v1h-1zM135.0,552.0h1v1h-1zM135.0,533.0h1v1h-1zM135.0,514.0h1v1h-1zM135.0,495.0h1v1h-1zM135.0,477.0h1v1h-1zM135.0,458.0h1v1h-1zM135.0,439.0h1v1h-1zM135.0,420.0h1v1h-1zM135.0,401.0h1v1h-1zM135.0,382.0h1v1h-1zM135.0,364.0h1v1h-1zM135.0,345.0h1v1h-1zM135.0,326.0h1v1h-1zM135.0,307.0h1v1h-1zM135.0,288.0h1v1h-1zM135.0,269.0h1v1h-1zM135.0,251.0h1v1h-1zM135.0,232.0h1v1h-1zM135.0,213.0h1v1h-1zM135.0,194.0h1v1h-1zM135.0,175.0h1v1h-1zM135.0,156.0h1v1h-1zM135.0,138.0h1v1h-1zM135.0,119.0h1v1h-1zM135.0,100.0h1v1h-1zM135.0,81.0h1v1h-1zM135.0,62.0h1v1h-1zM135.0,43.0h1v1h-1zM135.0,25.0h1v1h-1zM135.0,6.0h1v1h-1zM153.0,571.0h1v1h-1zM153.0,552.0h1v1h-1zM153.0,533.0h1v1h-1zM153.0,514.0h1v1h-1zM153.0,495.0h1v1h-1zM153.0,477.0h1v1h-1zM153.0,458.0h1v1h-1zM153.0,439.0h1v1h-1zM153.0,420.0h1v1h-1zM153.0,401.0h1v1h-1zM153.0,382.0h1v1h-1zM153.0,364.0h1v1h-1zM153.0,345.0h1v1h-1zM153.0,326.0h1v1h-1zM153.0,307.0h1v1h-1zM153.0,288.0h1v1h-1zM153.0,269.0h1v1h-1zM153.0,251.0h1v1h-1zM153.0,232.0h1v1h-1zM153.0,213.0h1v1h-1zM153.0,194.0h1v1h-1zM153.0,175.0h1v1h-1zM153.0,156.0h1v1h-1zM153.0,138.0h1v1h-1zM153.0,119.0h1v1h-1zM153.0,100.0h1v1h-1zM153.0,81.0h1v1h-1zM153.0,62.0h1v1h-1zM153.0,43.0h1v1h-1zM153.0,25.0h1v1h-1zM153.0,6.0h1v1h-1zM172.0,571.0h1v1h-1zM172.0,552.0h1v1h-1zM172.0,533.0h1v1h-1zM172.0,514.0h1v1h-1zM172.0,495.0h1v1h-1zM172.0,477.0h1v1h-1zM172.0,458.0h1v1h-1zM172.0,439.0h1v1h-1zM172.0,420.0h1v1h-1zM172.0,401.0h1v1h-1zM172.0,382.0h1v1h-1zM172.0,364.0h1v1h-1zM172.0,345.0h1v1h-1zM172.0,326.0h1v1h-1zM172.0,307.0h1v1h-1zM172.0,288.0h1v1h-1zM172.0,269.0h1v1h-1zM172.0,251.0h1v1h-1zM172.0,232.0h1v1h-1zM172.0,213.0h1v1h-1zM172.0,194.0h1v1h-1zM172.0,175.0h1v1h-1zM172.0,156.0h1v1h-1zM172.0,138.0h1v1h-1zM172.0,119.0h1v1h-1zM172.0,100.0h1v1h-1zM172.0,81.0h1v1h-1zM172.0,62.0h1v1h-1zM172.0,43.0h1v1h-1zM172.0,25.0h1v1h-1zM172.0,6.0h1v1h-1zM191.0,571.0h1v1h-1zM191.0,552.0h1v1h-1zM191.0,533.0h1v1h-1zM191.0,514.0h1v1h-1zM191.0,495.0h1v1h-1zM191.0,477.0h1v1h-1zM191.0,458.0h1v1h-1zM191.0,439.0h1v1h-1zM191.0,420.0h1v1h-1zM191.0,401.0h1v1h-1zM191.0,382.0h1v1h-1zM191.0,364.0h1v1h-1zM191.0,345.0h1v1h-1zM191.0,326.0h1v1h-1zM191.0,307.0h1v1h-1zM191.0,288.0h1v1h-1zM191.0,269.0h1v1h-1zM191.0,251.0h1v1h-1zM191.0,232.0h1v1h-1zM191.0,213.0h1v1h-1zM191.0,194.0h1v1h-1zM191.0,175.0h1v1h-1zM191.0,156.0h1v1h-1zM191.0,138.0h1v1h-1zM191.0,119.0h1v1h-1zM191.0,100.0h1v1h-1zM191.0,81.0h1v1h-1zM191.0,62.0h1v1h-1zM191.0,43.0h1v1h-1zM191.0,25.0h1v1h-1zM191.0,6.0h1v1h-1zM210.0,571.0h1v1h-1zM210.0,552.0h1v1h-1zM210.0,533.0h1v1h-1zM210.0,514.0h1v1h-1zM210.0,495.0h1v1h-1zM210.0,477.0h1v1h-1zM210.0,458.0h1v1h-1zM210.0,439.0h1v1h-1zM210.0,420.0h1v1h-1zM210.0,401.0h1v1h-1zM210.0,382.0h1v1h-1zM210.0,364.0h1v1h-1zM210.0,345.0h1v1h-1zM210.0,326.0h1v1h-1zM210.0,307.0h1v1h-1zM210.0,288.0h1v1h-1zM210.0,269.0h1v1h-1zM210.0,251.0h1v1h-1zM210.0,232.0h1v1h-1zM210.0,213.0h1v1h-1zM210.0,194.0h1v1h-1zM210.0,175.0h1v1h-1zM210.0,156.0h1v1h-1zM210.0,138.0h1v1h-1zM210.0,119.0h1v1h-1zM210.0,100.0h1v1h-1zM210.0,81.0h1v1h-1zM210.0,62.0h1v1h-1zM210.0,43.0h1v1h-1zM210.0,25.0h1v1h-1zM210.0,6.0h1v1h-1zM229.0,571.0h1v1h-1zM229.0,552.0h1v1h-1zM229.0,533.0h1v1h-1zM229.0,514.0h1v1h-1zM229.0,495.0h1v1h-1zM229.0,477.0h1v1h-1zM229.0,458.0h1v1h-1zM229.0,439.0h1v1h-1zM229.0,420.0h1v1h-1zM229.0,401.0h1v1h-1zM229.0,382.0h1v1h-1zM229.0,364.0h1v1h-1zM229.0,345.0h1v1h-1zM229.0,326.0h1v1h-1zM229.0,307.0h1v1h-1zM229.0,288.0h1v1h-1zM229.0,269.0h1v1h-1zM229.0,251.0h1v1h-1zM229.0,232.0h1v1h-1zM229.0,213.0h1v1h-1zM229.0,194.0h1v1h-1zM229.0,175.0h1v1h-1zM229.0,156.0h1v1h-1zM229.0,138.0h1v1h-1zM229.0,119.0h1v1h-1zM229.0,100.0h1v1h-1zM229.0,81.0h1v1h-1zM229.0,62.0h1v1h-1zM229.0,43.0h1v1h-1zM229.0,25.0h1v1h-1zM229.0,6.0h1v1h-1zM248.0,571.0h1v1h-1zM248.0,552.0h1v1h-1zM248.0,533.0h1v1h-1zM248.0,514.0h1v1h-1zM248.0,495.0h1v1h-1zM248.0,477.0h1v1h-1zM248.0,458.0h1v1h-1zM248.0,439.0h1v1h-1zM248.0,420.0h1v1h-1zM248.0,401.0h1v1h-1zM248.0,382.0h1v1h-1zM248.0,364.0h1v1h-1zM248.0,345.0h1v1h-1zM248.0,326.0h1v1h-1zM248.0,307.0h1v1h-1zM248.0,288.0h1v1h-1zM248.0,269.0h1v1h-1zM248.0,251.0h1v1h-1zM248.0,232.0h1v1h-1zM248.0,213.0h1v1h-1zM248.0,194.0h1v1h-1zM248.0,175.0h1v1h-1zM248.0,156.0h1v1h-1zM248.0,138.0h1v1h-1zM248.0,119.0h1v1h-1zM248.0,100.0h1v1h-1zM248.0,81.0h1v1h-1zM248.0,62.0h1v1h-1zM248.0,43.0h1v1h-1zM248.0,25.0h1v1h-1zM248.0,6.0h1v1h-1zM266.0,571.0h1v1h-1zM266.0,552.0h1v1h-1zM266.0,533.0h1v1h-1zM266.0,514.0h1v1h-1zM266.0,495.0h1v1h-1zM266.0,477.0h1v1h-1zM266.0,458.0h1v1h-1zM266.0,439.0h1v1h-1zM266.0,420.0h1v1h-1zM266.0,401.0h1v1h-1zM266.0,382.0h1v1h-1zM266.0,364.0h1v1h-1zM266.0,345.0h1v1h-1zM266.0,326.0h1v1h-1zM266.0,307.0h1v1h-1zM266.0,288.0h1v1h-1zM266.0,269.0h1v1h-1zM266.0,251.0h1v1h-1zM266.0,232.0h1v1h-1zM266.0,213.0h1v1h-1zM266.0,194.0h1v1h-1zM266.0,175.0h1v1h-1zM266.0,156.0h1v1h-1zM266.0,138.0h1v1h-1zM266.0,119.0h1v1h-1zM266.0,100.0h1v1h-1zM266.0,81.0h1v1h-1zM266.0,62.0h1v1h-1zM266.0,43.0h1v1h-1zM266.0,25.0h1v1h-1zM266.0,6.0h1v1h-1zM285.0,571.0h1v1h-1zM285.0,552.0h1v1h-1zM285.0,533.0h1v1h-1zM285.0,514.0h1v1h-1zM285.0,495.0h1v1h-1zM285.0,477.0h1v1h-1zM285.0,458.0h1v1h-1zM285.0,439.0h1v1h-1zM285.0,420.0h1v1h-1zM285.0,401.0h1v1h-1zM285.0,382.0h1v1h-1zM285.0,364.0h1v1h-1zM285.0,345.0h1v1h-1zM285.0,326.0h1v1h-1zM285.0,307.0h1v1h-1zM285.0,288.0h1v1h-1zM285.0,269.0h1v1h-1zM285.0,251.0h1v1h-1zM285.0,232.0h1v1h-1zM285.0,213.0h1v1h-1zM285.0,194.0h1v1h-1zM285.0,175.0h1v1h-1zM285.0,156.0h1v1h-1zM285.0,138.0h1v1h-1zM285.0,119.0h1v1h-1zM285.0,100.0h1v1h-1zM285.0,81.0h1v1h-1zM285.0,62.0h1v1h-1zM285.0,43.0h1v1h-1zM285.0,25.0h1v1h-1zM285.0,6.0h1v1h-1zM304.0,571.0h1v1h-1zM304.0,552.0h1v1h-1zM304.0,533.0h1v1h-1zM304.0,514.0h1v1h-1zM304.0,495.0h1v1h-1zM304.0,477.0h1v1h-1zM304.0,458.0h1v1h-1zM304.0,439.0h1v1h-1zM304.0,420.0h1v1h-1zM304.0,401.0h1v1h-1zM304.0,382.0h1v1h-1zM304.0,364.0h1v1h-1zM304.0,345.0h1v1h-1zM304.0,326.0h1v1h-1zM304.0,307.0h1v1h-1zM304.0,288.0h1v1h-1zM304.0,269.0h1v1h-1zM304.0,251.0h1v1h-1zM304.0,232.0h1v1h-1zM304.0,213.0h1v1h-1zM304.0,194.0h1v1h-1zM304.0,175.0h1v1h-1zM304.0,156.0h1v1h-1zM304.0,138.0h1v1h-1zM304.0,119.0h1v1h-1zM304.0,100.0h1v1h-1zM304.0,81.0h1v1h-1zM304.0,62.0h1v1h-1zM304.0,43.0h1v1h-1zM304.0,25.0h1v1h-1zM304.0,6.0h1v1h-1zM323.0,571.0h1v1h-1zM323.0,552.0h1v1h-1zM323.0,533.0h1v1h-1zM323.0,514.0h1v1h-1zM323.0,495.0h1v1h-1zM323.0,477.0h1v1h-1zM323.0,458.0h1v1h-1zM323.0,439.0h1v1h-1zM323.0,420.0h1v1h-1zM323.0,401.0h1v1h-1zM323.0,382.0h1v1h-1zM323.0,364.0h1v1h-1zM323.0,345.0h1v1h-1zM323.0,326.0h1v1h-1zM323.0,307.0h1v1h-1zM323.0,288.0h1v1h-1zM323.0,269.0h1v1h-1zM323.0,251.0h1v1h-1zM323.0,232.0h1v1h-1zM323.0,213.0h1v1h-1zM323.0,194.0h1v1h-1zM323.0,175.0h1v1h-1zM323.0,156.0h1v1h-1zM323.0,138.0h1v1h-1zM323.0,119.0h1v1h-1zM323.0,100.0h1v1h-1zM323.0,81.0h1v1h-1zM323.0,62.0h1v1h-1zM323.0,43.0h1v1h-1zM323.0,25.0h1v1h-1zM323.0,6.0h1v1h-1zM342.0,571.0h1v1h-1zM342.0,552.0h1v1h-1zM342.0,533.0h1v1h-1zM342.0,514.0h1v1h-1zM342.0,495.0h1v1h-1zM342.0,477.0h1v1h-1zM342.0,458.0h1v1h-1zM342.0,439.0h1v1h-1zM342.0,420.0h1v1h-1zM342.0,401.0h1v1h-1zM342.0,382.0h1v1h-1zM342.0,364.0h1v1h-1zM342.0,345.0h1v1h-1zM342.0,326.0h1v1h-1zM342.0,307.0h1v1h-1zM342.0,288.0h1v1h-1zM342.0,269.0h1v1h-1zM342.0,251.0h1v1h-1zM342.0,232.0h1v1h-1zM342.0,213.0h1v1h-1zM342.0,194.0h1v1h-1zM342.0,175.0h1v1h-1zM342.0,156.0h1v1h-1zM342.0,138.0h1v1h-1zM342.0,119.0h1v1h-1zM342.0,100.0h1v1h-1zM342.0,81.0h1v1h-1zM342.0,62.0h1v1h-1zM342.0,43.0h1v1h-1zM342.0,25.0h1v1h-1zM342.0,6.0h1v1h-1zM361.0,571.0h1v1h-1zM361.0,552.0h1v1h-1zM361.0,533.0h1v1h-1zM361.0,514.0h1v1h-1zM361.0,495.0h1v1h-1zM361.0,477.0h1v1h-1zM361.0,458.0h1v1h-1zM361.0,439.0h1v1h-1zM361.0,420.0h1v1h-1zM361.0,401.0h1v1h-1zM361.0,382.0h1v1h-1zM361.0,364.0h1v1h-1zM361.0,345.0h1v1h-1zM361.0,326.0h1v1h-1zM361.0,307.0h1v1h-1zM361.0,288.0h1v1h-1zM361.0,269.0h1v1h-1zM361.0,251.0h1v1h-1zM361.0,232.0h1v1h-1zM361.0,213.0h1v1h-1zM361.0,194.0h1v1h-1zM361.0,175.0h1v1h-1zM361.0,156.0h1v1h-1zM361.0,138.0h1v1h-1zM361.0,119.0h1v1h-1zM361.0,100.0h1v1h-1zM361.0,81.0h1v1h-1zM361.0,62.0h1v1h-1zM361.0,43.0h1v1h-1zM361.0,25.0h1v1h-1zM361.0,6.0h1v1h-1zM379.0,571.0h1v1h-1zM379.0,552.0h1v1h-1zM379.0,533.0h1v1h-1zM379.0,514.0h1v1h-1zM379.0,495.0h1v1h-1zM379.0,477.0h1v1h-1zM379.0,458.0h1v1h-1zM379.0,439.0h1v1h-1zM379.0,420.0h1v1h-1zM379.0,401.0h1v1h-1zM379.0,382.0h1v1h-1zM379.0,364.0h1v1h-1zM379.0,345.0h1v1h-1zM379.0,326.0h1v1h-1zM379.0,307.0h1v1h-1zM379.0,288.0h1v1h-1zM379.0,269.0h1v1h-1zM379.0,251.0h1v1h-1zM379.0,232.0h1v1h-1zM379.0,213.0h1v1h-1zM379.0,194.0h1v1h-1zM379.0,175.0h1v1h-1zM379.0,156.0h1v1h-1zM379.0,138.0h1v1h-1zM379.0,119.0h1v1h-1zM379.0,100.0h1v1h-1zM379.0,81.0h1v1h-1zM379.0,62.0h1v1h-1zM379.0,43.0h1v1h-1zM379.0,25.0h1v1h-1zM379.0,6.0h1v1h-1zM398.0,571.0h1v1h-1zM398.0,552.0h1v1h-1zM398.0,533.0h1v1h-1zM398.0,514.0h1v1h-1zM398.0,495.0h1v1h-1zM398.0,477.0h1v1h-1zM398.0,458.0h1v1h-1zM398.0,439.0h1v1h-1zM398.0,420.0h1v1h-1zM398.0,401.0h1v1h-1zM398.0,382.0h1v1h-1zM398.0,364.0h1v1h-1zM398.0,345.0h1v1h-1zM398.0,326.0h1v1h-1zM398.0,307.0h1v1h-1zM398.0,288.0h1v1h-1zM398.0,269.0h1v1h-1zM398.0,251.0h1v1h-1zM398.0,232.0h1v1h-1zM398.0,213.0h1v1h-1zM398.0,194.0h1v1h-1zM398.0,175.0h1v1h-1zM398.0,156.0h1v1h-1zM398.0,138.0h1v1h-1zM398.0,119.0h1v1h-1zM398.0,100.0h1v1h-1zM398.0,81.0h1v1h-1zM398.0,62.0h1v1h-1zM398.0,43.0h1v1h-1zM398.0,25.0h1v1h-1zM398.0,6.0h1v1h-1zM417.0,571.0h1v1h-1zM417.0,552.0h1v1h-1zM417.0,533.0h1v1h-1zM417.0,514.0h1v1h-1zM417.0,495.0h1v1h-1zM417.0,477.0h1v1h-1zM417.0,458.0h1v1h-1zM417.0,439.0h1v1h-1zM417.0,420.0h1v1h-1zM417.0,401.0h1v1h-1zM417.0,382.0h1v1h-1zM417.0,364.0h1v1h-1zM417.0,345.0h1v1h-1zM417.0,326.0h1v1h-1zM417.0,307.0h1v1h-1zM417.0,288.0h1v1h-1zM417.0,269.0h1v1h-1zM417.0,251.0h1v1h-1zM417.0,232.0h1v1h-1zM417.0,213.0h1v1h-1zM417.0,194.0h1v1h-1zM417.0,175.0h1v1h-1zM417.0,156.0h1v1h-1zM417.0,138.0h1v1h-1zM417.0,119.0h1v1h-1zM417.0,100.0h1v1h-1zM417.0,81.0h1v1h-1zM417.0,62.0h1v1h-1zM417.0,43.0h1v1h-1zM417.0,25.0h1v1h-1zM417.0,6.0h1v1h-1zM436.0,571.0h1v1h-1zM436.0,552.0h1v1h-1zM436.0,533.0h1v1h-1zM436.0,514.0h1v1h-1zM436.0,495.0h1v1h-1zM436.0,477.0h1v1h-1zM436.0,458.0h1v1h-1zM436.0,439.0h1v1h-1zM436.0,420.0h1v1h-1zM436.0,401.0h1v1h-1zM436.0,382.0h1v1h-1zM436.0,364.0h1v1h-1zM436.0,345.0h1v1h-1zM436.0,326.0h1v1h-1zM436.0,307.0h1v1h-1zM436.0,288.0h1v1h-1zM436.0,269.0h1v1h-1zM436.0,251.0h1v1h-1zM436.0,232.0h1v1h-1zM436.0,213.0h1v1h-1zM436.0,194.0h1v1h-1zM436.0,175.0h1v1h-1zM436.0,156.0h1v1h-1zM436.0,138.0h1v1h-1zM436.0,119.0h1v1h-1zM436.0,100.0h1v1h-1zM436.0,81.0h1v1h-1zM436.0,62.0h1v1h-1zM436.0,43.0h1v1h-1zM436.0,25.0h1v1h-1zM436.0,6.0h1v1h-1zM455.0,571.0h1v1h-1zM455.0,552.0h1v1h-1zM455.0,533.0h1v1h-1zM455.0,514.0h1v1h-1zM455.0,495.0h1v1h-1zM455.0,477.0h1v1h-1zM455.0,458.0h1v1h-1zM455.0,439.0h1v1h-1zM455.0,420.0h1v1h-1zM455.0,401.0h1v1h-1zM455.0,382.0h1v1h-1zM455.0,364.0h1v1h-1zM455.0,345.0h1v1h-1zM455.0,326.0h1v1h-1zM455.0,307.0h1v1h-1zM455.0,288.0h1v1h-1zM455.0,269.0h1v1h-1zM455.0,251.0h1v1h-1zM455.0,232.0h1v1h-1zM455.0,213.0h1v1h-1zM455.0,194.0h1v1h-1zM455.0,175.0h1v1h-1zM455.0,156.0h1v1h-1zM455.0,138.0h1v1h-1zM455.0,119.0h1v1h-1zM455.0,100.0h1v1h-1zM455.0,81.0h1v1h-1zM455.0,62.0h1v1h-1zM455.0,43.0h1v1h-1zM455.0,25.0h1v1h-1zM455.0,6.0h1v1h-1zM474.0,571.0h1v1h-1zM474.0,552.0h1v1h-1zM474.0,533.0h1v1h-1zM474.0,514.0h1v1h-1zM474.0,495.0h1v1h-1zM474.0,477.0h1v1h-1zM474.0,458.0h1v1h-1zM474.0,439.0h1v1h-1zM474.0,420.0h1v1h-1zM474.0,401.0h1v1h-1zM474.0,382.0h1v1h-1zM474.0,364.0h1v1h-1zM474.0,345.0h1v1h-1zM474.0,326.0h1v1h-1zM474.0,307.0h1v1h-1zM474.0,288.0h1v1h-1zM474.0,269.0h1v1h-1zM474.0,251.0h1v1h-1zM474.0,232.0h1v1h-1zM474.0,213.0h1v1h-1zM474.0,194.0h1v1h-1zM474.0,175.0h1v1h-1zM474.0,156.0h1v1h-1zM474.0,138.0h1v1h-1zM474.0,119.0h1v1h-1zM474.0,100.0h1v1h-1zM474.0,81.0h1v1h-1zM474.0,62.0h1v1h-1zM474.0,43.0h1v1h-1zM474.0,25.0h1v1h-1zM474.0,6.0h1v1h-1zM492.0,571.0h1v1h-1zM492.0,552.0h1v1h-1zM492.0,533.0h1v1h-1zM492.0,514.0h1v1h-1zM492.0,495.0h1v1h-1zM492.0,477.0h1v1h-1zM492.0,458.0h1v1h-1zM492.0,439.0h1v1h-1zM492.0,420.0h1v1h-1zM492.0,401.0h1v1h-1zM492.0,382.0h1v1h-1zM492.0,364.0h1v1h-1zM492.0,345.0h1v1h-1zM492.0,326.0h1v1h-1zM492.0,307.0h1v1h-1zM492.0,288.0h1v1h-1zM492.0,269.0h1v1h-1zM492.0,251.0h1v1h-1zM492.0,232.0h1v1h-1zM492.0,213.0h1v1h-1zM492.0,194.0h1v1h-1zM492.0,175.0h1v1h-1zM492.0,156.0h1v1h-1zM492.0,138.0h1v1h-1zM492.0,119.0h1v1h-1zM492.0,100.0h1v1h-1zM492.0,81.0h1v1h-1zM492.0,62.0h1v1h-1zM492.0,43.0h1v1h-1zM492.0,25.0h1v1h-1zM492.0,6.0h1v1h-1zM511.0,571.0h1v1h-1zM511.0,552.0h1v1h-1zM511.0,533.0h1v1h-1zM511.0,514.0h1v1h-1zM511.0,495.0h1v1h-1zM511.0,477.0h1v1h-1zM511.0,458.0h1v1h-1zM511.0,439.0h1v1h-1zM511.0,420.0h1v1h-1zM511.0,401.0h1v1h-1zM511.0,382.0h1v1h-1zM511.0,364.0h1v1h-1zM511.0,345.0h1v1h-1zM511.0,326.0h1v1h-1zM511.0,307.0h1v1h-1zM511.0,288.0h1v1h-1zM511.0,269.0h1v1h-1zM511.0,251.0h1v1h-1zM511.0,232.0h1v1h-1zM511.0,213.0h1v1h-1zM511.0,194.0h1v1h-1zM511.0,175.0h1v1h-1zM511.0,156.0h1v1h-1zM511.0,138.0h1v1h-1zM511.0,119.0h1v1h-1zM511.0,100.0h1v1h-1zM511.0,81.0h1v1h-1zM511.0,62.0h1v1h-1zM511.0,43.0h1v1h-1zM511.0,25.0h1v1h-1zM511.0,6.0h1v1h-1zM530.0,571.0h1v1h-1zM530.0,552.0h1v1h-1zM530.0,533.0h1v1h-1zM530.0,514.0h1v1h-1zM530.0,495.0h1v1h-1zM530.0,477.0h1v1h-1zM530.0,458.0h1v1h-1zM530.0,439.0h1v1h-1zM530.0,420.0h1v1h-1zM530.0,401.0h1v1h-1zM530.0,382.0h1v1h-1zM530.0,364.0h1v1h-1zM530.0,345.0h1v1h-1zM530.0,326.0h1v1h-1zM530.0,307.0h1v1h-1zM530.0,288.0h1v1h-1zM530.0,269.0h1v1h-1zM530.0,251.0h1v1h-1zM530.0,232.0h1v1h-1zM530.0,213.0h1v1h-1zM530.0,194.0h1v1h-1zM530.0,175.0h1v1h-1zM530.0,156.0h1v1h-1zM530.0,138.0h1v1h-1zM530.0,119.0h1v1h-1zM530.0,100.0h1v1h-1zM530.0,81.0h1v1h-1zM530.0,62.0h1v1h-1zM530.0,43.0h1v1h-1zM530.0,25.0h1v1h-1zM530.0,6.0h1v1h-1zM549.0,571.0h1v1h-1zM549.0,552.0h1v1h-1zM549.0,533.0h1v1h-1zM549.0,514.0h1v1h-1zM549.0,495.0h1v1h-1zM549.0,477.0h1v1h-1zM549.0,458.0h1v1h-1zM549.0,439.0h1v1h-1zM549.0,420.0h1v1h-1zM549.0,401.0h1v1h-1zM549.0,382.0h1v1h-1zM549.0,364.0h1v1h-1zM549.0,345.0h1v1h-1zM549.0,326.0h1v1h-1zM549.0,307.0h1v1h-1zM549.0,288.0h1v1h-1zM549.0,269.0h1v1h-1zM549.0,251.0h1v1h-1zM549.0,232.0h1v1h-1zM549.0,213.0h1v1h-1zM549.0,194.0h1v1h-1zM549.0,175.0h1v1h-1zM549.0,156.0h1v1h-1zM549.0,138.0h1v1h-1zM549.0,119.0h1v1h-1zM549.0,100.0h1v1h-1zM549.0,81.0h1v1h-1zM549.0,62.0h1v1h-1zM549.0,43.0h1v1h-1zM549.0,25.0h1v1h-1zM549.0,6.0h1v1h-1zM568.0,571.0h1v1h-1zM568.0,552.0h1v1h-1zM568.0,533.0h1v1h-1zM568.0,514.0h1v1h-1zM568.0,495.0h1v1h-1zM568.0,477.0h1v1h-1zM568.0,458.0h1v1h-1zM568.0,439.0h1v1h-1zM568.0,420.0h1v1h-1zM568.0,401.0h1v1h-1zM568.0,382.0h1v1h-1zM568.0,364.0h1v1h-1zM568.0,345.0h1v1h-1zM568.0,326.0h1v1h-1zM568.0,307.0h1v1h-1zM568.0,288.0h1v1h-1zM568.0,269.0h1v1h-1zM568.0,251.0h1v1h-1zM568.0,232.0h1v1h-1zM568.0,213.0h1v1h-1zM568.0,194.0h1v1h-1zM568.0,175.0h1v1h-1zM568.0,156.0h1v1h-1zM568.0,138.0h1v1h-1zM568.0,119.0h1v1h-1zM568.0,100.0h1v1h-1zM568.0,81.0h1v1h-1zM568.0,62.0h1v1h-1zM568.0,43.0h1v1h-1zM568.0,25.0h1v1h-1zM568.0,6.0h1v1h-1zM587.0,571.0h1v1h-1zM587.0,552.0h1v1h-1zM587.0,533.0h1v1h-1zM587.0,514.0h1v1h-1zM587.0,495.0h1v1h-1zM587.0,477.0h1v1h-1zM587.0,458.0h1v1h-1zM587.0,439.0h1v1h-1zM587.0,420.0h1v1h-1zM587.0,401.0h1v1h-1zM587.0,382.0h1v1h-1zM587.0,364.0h1v1h-1zM587.0,345.0h1v1h-1zM587.0,326.0h1v1h-1zM587.0,307.0h1v1h-1zM587.0,288.0h1v1h-1zM587.0,269.0h1v1h-1zM587.0,251.0h1v1h-1zM587.0,232.0h1v1h-1zM587.0,213.0h1v1h-1zM587.0,194.0h1v1h-1zM587.0,175.0h1v1h-1zM587.0,156.0h1v1h-1zM587.0,138.0h1v1h-1zM587.0,119.0h1v1h-1zM587.0,100.0h1v1h-1zM587.0,81.0h1v1h-1zM587.0,62.0h1v1h-1zM587.0,43.0h1v1h-1zM587.0,25.0h1v1h-1zM587.0,6.0h1v1h-1zM605.0,571.0h1v1h-1zM605.0,552.0h1v1h-1zM605.0,533.0h1v1h-1zM605.0,514.0h1v1h-1zM605.0,495.0h1v1h-1zM605.0,477.0h1v1h-1zM605.0,458.0h1v1h-1zM605.0,439.0h1v1h-1zM605.0,420.0h1v1h-1zM605.0,401.0h1v1h-1zM605.0,382.0h1v1h-1zM605.0,364.0h1v1h-1zM605.0,345.0h1v1h-1zM605.0,326.0h1v1h-1zM605.0,307.0h1v1h-1zM605.0,288.0h1v1h-1zM605.0,269.0h1v1h-1zM605.0,251.0h1v1h-1zM605.0,232.0h1v1h-1zM605.0,213.0h1v1h-1zM605.0,194.0h1v1h-1zM605.0,175.0h1v1h-1zM605.0,156.0h1v1h-1zM605.0,138.0h1v1h-1zM605.0,119.0h1v1h-1zM605.0,100.0h1v1h-1zM605.0,81.0h1v1h-1zM605.0,62.0h1v1h-1zM605.0,43.0h1v1h-1zM605.0,25.0h1v1h-1zM605.0,6.0h1v1h-1zM624.0,571.0h1v1h-1zM624.0,552.0h1v1h-1zM624.0,533.0h1v1h-1zM624.0,514.0h1v1h-1zM624.0,495.0h1v1h-1zM624.0,477.0h1v1h-1zM624.0,458.0h1v1h-1zM624.0,439.0h1v1h-1zM624.0,420.0h1v1h-1zM624.0,401.0h1v1h-1zM624.0,382.0h1v1h-1zM624.0,364.0h1v1h-1zM624.0,345.0h1v1h-1zM624.0,326.0h1v1h-1zM624.0,307.0h1v1h-1zM624.0,288.0h1v1h-1zM624.0,269.0h1v1h-1zM624.0,251.0h1v1h-1zM624.0,232.0h1v1h-1zM624.0,213.0h1v1h-1zM624.0,194.0h1v1h-1zM624.0,175.0h1v1h-1zM624.0,156.0h1v1h-1zM624.0,138.0h1v1h-1zM624.0,119.0h1v1h-1zM624.0,100.0h1v1h-1zM624.0,81.0h1v1h-1zM624.0,62.0h1v1h-1zM624.0,43.0h1v1h-1zM624.0,25.0h1v1h-1zM624.0,6.0h1v1h-1zM643.0,571.0h1v1h-1zM643.0,552.0h1v1h-1zM643.0,533.0h1v1h-1zM643.0,514.0h1v1h-1zM643.0,495.0h1v1h-1zM643.0,477.0h1v1h-1zM643.0,458.0h1v1h-1zM643.0,439.0h1v1h-1zM643.0,420.0h1v1h-1zM643.0,401.0h1v1h-1zM643.0,382.0h1v1h-1zM643.0,364.0h1v1h-1zM643.0,345.0h1v1h-1zM643.0,326.0h1v1h-1zM643.0,307.0h1v1h-1zM643.0,288.0h1v1h-1zM643.0,269.0h1v1h-1zM643.0,251.0h1v1h-1zM643.0,232.0h1v1h-1zM643.0,213.0h1v1h-1zM643.0,194.0h1v1h-1zM643.0,175.0h1v1h-1zM643.0,156.0h1v1h-1zM643.0,138.0h1v1h-1zM643.0,119.0h1v1h-1zM643.0,100.0h1v1h-1zM643.0,81.0h1v1h-1zM643.0,62.0h1v1h-1zM643.0,43.0h1v1h-1zM643.0,25.0h1v1h-1zM643.0,6.0h1v1h-1zM662.0,571.0h1v1h-1zM662.0,552.0h1v1h-1zM662.0,533.0h1v1h-1zM662.0,514.0h1v1h-1zM662.0,495.0h1v1h-1zM662.0,477.0h1v1h-1zM662.0,458.0h1v1h-1zM662.0,439.0h1v1h-1zM662.0,420.0h1v1h-1zM662.0,401.0h1v1h-1zM662.0,382.0h1v1h-1zM662.0,364.0h1v1h-1zM662.0,345.0h1v1h-1zM662.0,326.0h1v1h-1zM662.0,307.0h1v1h-1zM662.0,288.0h1v1h-1zM662.0,269.0h1v1h-1zM662.0,251.0h1v1h-1zM662.0,232.0h1v1h-1zM662.0,213.0h1v1h-1zM662.0,194.0h1v1h-1zM662.0,175.0h1v1h-1zM662.0,156.0h1v1h-1zM662.0,138.0h1v1h-1zM662.0,119.0h1v1h-1zM662.0,100.0h1v1h-1zM662.0,81.0h1v1h-1zM662.0,62.0h1v1h-1zM662.0,43.0h1v1h-1zM662.0,25.0h1v1h-1zM662.0,6.0h1v1h-1zM681.0,571.0h1v1h-1zM681.0,552.0h1v1h-1zM681.0,533.0h1v1h-1zM681.0,514.0h1v1h-1zM681.0,495.0h1v1h-1zM681.0,477.0h1v1h-1zM681.0,458.0h1v1h-1zM681.0,439.0h1v1h-1zM681.0,420.0h1v1h-1zM681.0,401.0h1v1h-1zM681.0,382.0h1v1h-1zM681.0,364.0h1v1h-1zM681.0,345.0h1v1h-1zM681.0,326.0h1v1h-1zM681.0,307.0h1v1h-1zM681.0,288.0h1v1h-1zM681.0,269.0h1v1h-1zM681.0,251.0h1v1h-1zM681.0,232.0h1v1h-1zM681.0,213.0h1v1h-1zM681.0,194.0h1v1h-1zM681.0,175.0h1v1h-1zM681.0,156.0h1v1h-1zM681.0,138.0h1v1h-1zM681.0,119.0h1v1h-1zM681.0,100.0h1v1h-1zM681.0,81.0h1v1h-1zM681.0,62.0h1v1h-1zM681.0,43.0h1v1h-1zM681.0,25.0h1v1h-1zM681.0,6.0h1v1h-1zM700.0,571.0h1v1h-1zM700.0,552.0h1v1h-1zM700.0,533.0h1v1h-1zM700.0,514.0h1v1h-1zM700.0,495.0h1v1h-1zM700.0,477.0h1v1h-1zM700.0,458.0h1v1h-1zM700.0,439.0h1v1h-1zM700.0,420.0h1v1h-1zM700.0,401.0h1v1h-1zM700.0,382.0h1v1h-1zM700.0,364.0h1v1h-1zM700.0,345.0h1v1h-1zM700.0,326.0h1v1h-1zM700.0,307.0h1v1h-1zM700.0,288.0h1v1h-1zM700.0,269.0h1v1h-1zM700.0,251.0h1v1h-1zM700.0,232.0h1v1h-1zM700.0,213.0h1v1h-1zM700.0,194.0h1v1h-1zM700.0,175.0h1v1h-1zM700.0,156.0h1v1h-1zM700.0,138.0h1v1h-1zM700.0,119.0h1v1h-1zM700.0,100.0h1v1h-1zM700.0,81.0h1v1h-1zM700.0,62.0h1v1h-1zM700.0,43.0h1v1h-1zM700.0,25.0h1v1h-1zM700.0,6.0h1v1h-1zM718.0,571.0h1v1h-1zM718.0,552.0h1v1h-1zM718.0,533.0h1v1h-1zM718.0,514.0h1v1h-1zM718.0,495.0h1v1h-1zM718.0,477.0h1v1h-1zM718.0,458.0h1v1h-1zM718.0,439.0h1v1h-1zM718.0,420.0h1v1h-1zM718.0,401.0h1v1h-1zM718.0,382.0h1v1h-1zM718.0,364.0h1v1h-1zM718.0,345.0h1v1h-1zM718.0,326.0h1v1h-1zM718.0,307.0h1v1h-1zM718.0,288.0h1v1h-1zM718.0,269.0h1v1h-1zM718.0,251.0h1v1h-1zM718.0,232.0h1v1h-1zM718.0,213.0h1v1h-1zM718.0,194.0h1v1h-1zM718.0,175.0h1v1h-1zM718.0,156.0h1v1h-1zM718.0,138.0h1v1h-1zM718.0,119.0h1v1h-1zM718.0,100.0h1v1h-1zM718.0,81.0h1v1h-1zM718.0,62.0h1v1h-1zM718.0,43.0h1v1h-1zM718.0,25.0h1v1h-1zM718.0,6.0h1v1h-1zM737.0,571.0h1v1h-1zM737.0,552.0h1v1h-1zM737.0,533.0h1v1h-1zM737.0,514.0h1v1h-1zM737.0,495.0h1v1h-1zM737.0,477.0h1v1h-1zM737.0,458.0h1v1h-1zM737.0,439.0h1v1h-1zM737.0,420.0h1v1h-1zM737.0,401.0h1v1h-1zM737.0,382.0h1v1h-1zM737.0,364.0h1v1h-1zM737.0,345.0h1v1h-1zM737.0,326.0h1v1h-1zM737.0,307.0h1v1h-1zM737.0,288.0h1v1h-1zM737.0,269.0h1v1h-1zM737.0,251.0h1v1h-1zM737.0,232.0h1v1h-1zM737.0,213.0h1v1h-1zM737.0,194.0h1v1h-1zM737.0,175.0h1v1h-1zM737.0,156.0h1v1h-1zM737.0,138.0h1v1h-1zM737.0,119.0h1v1h-1zM737.0,100.0h1v1h-1zM737.0,81.0h1v1h-1zM737.0,62.0h1v1h-1zM737.0,43.0h1v1h-1zM737.0,25.0h1v1h-1zM737.0,6.0h1v1h-1zM756.0,571.0h1v1h-1zM756.0,552.0h1v1h-1zM756.0,533.0h1v1h-1zM756.0,514.0h1v1h-1zM756.0,495.0h1v1h-1zM756.0,477.0h1v1h-1zM756.0,458.0h1v1h-1zM756.0,439.0h1v1h-1zM756.0,420.0h1v1h-1zM756.0,401.0h1v1h-1zM756.0,382.0h1v1h-1zM756.0,364.0h1v1h-1zM756.0,345.0h1v1h-1zM756.0,326.0h1v1h-1zM756.0,307.0h1v1h-1zM756.0,288.0h1v1h-1zM756.0,269.0h1v1h-1zM756.0,251.0h1v1h-1zM756.0,232.0h1v1h-1zM756.0,213.0h1v1h-1zM756.0,194.0h1v1h-1zM756.0,175.0h1v1h-1zM756.0,156.0h1v1h-1zM756.0,138.0h1v1h-1zM756.0,119.0h1v1h-1zM756.0,100.0h1v1h-1zM756.0,81.0h1v1h-1zM756.0,62.0h1v1h-1zM756.0,43.0h1v1h-1zM756.0,25.0h1v1h-1zM756.0,6.0h1v1h-1zM775.0,571.0h1v1h-1zM775.0,552.0h1v1h-1zM775.0,533.0h1v1h-1zM775.0,514.0h1v1h-1zM775.0,495.0h1v1h-1zM775.0,477.0h1v1h-1zM775.0,458.0h1v1h-1zM775.0,439.0h1v1h-1zM775.0,420.0h1v1h-1zM775.0,401.0h1v1h-1zM775.0,382.0h1v1h-1zM775.0,364.0h1v1h-1zM775.0,345.0h1v1h-1zM775.0,326.0h1v1h-1zM775.0,307.0h1v1h-1zM775.0,288.0h1v1h-1zM775.0,269.0h1v1h-1zM775.0,251.0h1v1h-1zM775.0,232.0h1v1h-1zM775.0,213.0h1v1h-1zM775.0,194.0h1v1h-1zM775.0,175.0h1v1h-1zM775.0,156.0h1v1h-1zM775.0,138.0h1v1h-1zM775.0,119.0h1v1h-1zM775.0,100.0h1v1h-1zM775.0,81.0h1v1h-1zM775.0,62.0h1v1h-1zM775.0,43.0h1v1h-1zM775.0,25.0h1v1h-1zM775.0,6.0h1v1h-1zM794.0,571.0h1v1h-1zM794.0,552.0h1v1h-1zM794.0,533.0h1v1h-1zM794.0,514.0h1v1h-1zM794.0,495.0h1v1h-1zM794.0,477.0h1v1h-1zM794.0,458.0h1v1h-1zM794.0,439.0h1v1h-1zM794.0,420.0h1v1h-1zM794.0,401.0h1v1h-1zM794.0,382.0h1v1h-1zM794.0,364.0h1v1h-1zM794.0,345.0h1v1h-1zM794.0,326.0h1v1h-1zM794.0,307.0h1v1h-1zM794.0,288.0h1v1h-1zM794.0,269.0h1v1h-1zM794.0,251.0h1v1h-1zM794.0,232.0h1v1h-1zM794.0,213.0h1v1h-1zM794.0,194.0h1v1h-1zM794.0,175.0h1v1h-1zM794.0,156.0h1v1h-1zM794.0,138.0h1v1h-1zM794.0,119.0h1v1h-1zM794.0,100.0h1v1h-1zM794.0,81.0h1v1h-1zM794.0,62.0h1v1h-1zM794.0,43.0h1v1h-1zM794.0,25.0h1v1h-1zM794.0,6.0h1v1h-1zM812.0,571.0h1v1h-1zM812.0,552.0h1v1h-1zM812.0,533.0h1v1h-1zM812.0,514.0h1v1h-1zM812.0,495.0h1v1h-1zM812.0,477.0h1v1h-1zM812.0,458.0h1v1h-1zM812.0,439.0h1v1h-1zM812.0,420.0h1v1h-1zM812.0,401.0h1v1h-1zM812.0,382.0h1v1h-1zM812.0,364.0h1v1h-1zM812.0,345.0h1v1h-1zM812.0,326.0h1v1h-1zM812.0,307.0h1v1h-1zM812.0,288.0h1v1h-1zM812.0,269.0h1v1h-1zM812.0,251.0h1v1h-1zM812.0,232.0h1v1h-1zM812.0,213.0h1v1h-1zM812.0,194.0h1v1h-1zM812.0,175.0h1v1h-1zM812.0,156.0h1v1h-1zM812.0,138.0h1v1h-1zM812.0,119.0h1v1h-1zM812.0,100.0h1v1h-1zM812.0,81.0h1v1h-1zM812.0,62.0h1v1h-1zM812.0,43.0h1v1h-1zM812.0,25.0h1v1h-1zM812.0,6.0h1v1h-1zM831.0,571.0h1v1h-1zM831.0,552.0h1v1h-1zM831.0,533.0h1v1h-1zM831.0,514.0h1v1h-1zM831.0,495.0h1v1h-1zM831.0,477.0h1v1h-1zM831.0,458.0h1v1h-1zM831.0,439.0h1v1h-1zM831.0,420.0h1v1h-1zM831.0,401.0h1v1h-1zM831.0,382.0h1v1h-1zM831.0,364.0h1v1h-1zM831.0,345.0h1v1h-1zM831.0,326.0h1v1h-1zM831.0,307.0h1v1h-1zM831.0,288.0h1v1h-1zM831.0,269.0h1v1h-1zM831.0,251.0h1v1h-1zM831.0,232.0h1v1h-1zM831.0,213.0h1v1h-1zM831.0,194.0h1v1h-1zM831.0,175.0h1v1h-1zM831.0,156.0h1v1h-1zM831.0,138.0h1v1h-1zM831.0,119.0h1v1h-1zM831.0,100.0h1v1h-1zM831.0,81.0h1v1h-1zM831.0,62.0h1v1h-1zM831.0,43.0h1v1h-1zM831.0,25.0h1v1h-1zM831.0,6.0h1v1h-1zM850.0,571.0h1v1h-1zM850.0,552.0h1v1h-1zM850.0,533.0h1v1h-1zM850.0,514.0h1v1h-1zM850.0,495.0h1v1h-1zM850.0,477.0h1v1h-1zM850.0,458.0h1v1h-1zM850.0,439.0h1v1h-1zM850.0,420.0h1v1h-1zM850.0,401.0h1v1h-1zM850.0,382.0h1v1h-1zM850.0,364.0h1v1h-1zM850.0,345.0h1v1h-1zM850.0,326.0h1v1h-1zM850.0,307.0h1v1h-1zM850.0,288.0h1v1h-1zM850.0,269.0h1v1h-1zM850.0,251.0h1v1h-1zM850.0,232.0h1v1h-1zM850.0,213.0h1v1h-1zM850.0,194.0h1v1h-1zM850.0,175.0h1v1h-1zM850.0,156.0h1v1h-1zM850.0,138.0h1v1h-1zM850.0,119.0h1v1h-1zM850.0,100.0h1v1h-1zM850.0,81.0h1v1h-1zM850.0,62.0h1v1h-1zM850.0,43.0h1v1h-1zM850.0,25.0h1v1h-1zM850.0,6.0h1v1h-1zM869.0,571.0h1v1h-1zM869.0,552.0h1v1h-1zM869.0,533.0h1v1h-1zM869.0,514.0h1v1h-1zM869.0,495.0h1v1h-1zM869.0,477.0h1v1h-1zM869.0,458.0h1v1h-1zM869.0,439.0h1v1h-1zM869.0,420.0h1v1h-1zM869.0,401.0h1v1h-1zM869.0,382.0h1v1h-1zM869.0,364.0h1v1h-1zM869.0,345.0h1v1h-1zM869.0,326.0h1v1h-1zM869.0,307.0h1v1h-1zM869.0,288.0h1v1h-1zM869.0,269.0h1v1h-1zM869.0,251.0h1v1h-1zM869.0,232.0h1v1h-1zM869.0,213.0h1v1h-1zM869.0,194.0h1v1h-1zM869.0,175.0h1v1h-1zM869.0,156.0h1v1h-1zM869.0,138.0h1v1h-1zM869.0,119.0h1v1h-1zM869.0,100.0h1v1h-1zM869.0,81.0h1v1h-1zM869.0,62.0h1v1h-1zM869.0,43.0h1v1h-1zM869.0,25.0h1v1h-1zM869.0,6.0h1v1h-1zM888.0,571.0h1v1h-1zM888.0,552.0h1v1h-1zM888.0,533.0h1v1h-1zM888.0,514.0h1v1h-1zM888.0,495.0h1v1h-1zM888.0,477.0h1v1h-1zM888.0,458.0h1v1h-1zM888.0,439.0h1v1h-1zM888.0,420.0h1v1h-1zM888.0,401.0h1v1h-1zM888.0,382.0h1v1h-1zM888.0,364.0h1v1h-1zM888.0,345.0h1v1h-1zM888.0,326.0h1v1h-1zM888.0,307.0h1v1h-1zM888.0,288.0h1v1h-1zM888.0,269.0h1v1h-1zM888.0,251.0h1v1h-1zM888.0,232.0h1v1h-1zM888.0,213.0h1v1h-1zM888.0,194.0h1v1h-1zM888.0,175.0h1v1h-1zM888.0,156.0h1v1h-1zM888.0,138.0h1v1h-1zM888.0,119.0h1v1h-1zM888.0,100.0h1v1h-1zM888.0,81.0h1v1h-1zM888.0,62.0h1v1h-1zM888.0,43.0h1v1h-1zM888.0,25.0h1v1h-1zM888.0,6.0h1v1h-1zM907.0,571.0h1v1h-1zM907.0,552.0h1v1h-1zM907.0,533.0h1v1h-1zM907.0,514.0h1v1h-1zM907.0,495.0h1v1h-1zM907.0,477.0h1v1h-1zM907.0,458.0h1v1h-1zM907.0,439.0h1v1h-1zM907.0,420.0h1v1h-1zM907.0,401.0h1v1h-1zM907.0,382.0h1v1h-1zM907.0,364.0h1v1h-1zM907.0,345.0h1v1h-1zM907.0,326.0h1v1h-1zM907.0,307.0h1v1h-1zM907.0,288.0h1v1h-1zM907.0,269.0h1v1h-1zM907.0,251.0h1v1h-1zM907.0,232.0h1v1h-1zM907.0,213.0h1v1h-1zM907.0,194.0h1v1h-1zM907.0,175.0h1v1h-1zM907.0,156.0h1v1h-1zM907.0,138.0h1v1h-1zM907.0,119.0h1v1h-1zM907.0,100.0h1v1h-1zM907.0,81.0h1v1h-1zM907.0,62.0h1v1h-1zM907.0,43.0h1v1h-1zM907.0,25.0h1v1h-1zM907.0,6.0h1v1h-1zM925.0,571.0h1v1h-1zM925.0,552.0h1v1h-1zM925.0,533.0h1v1h-1zM925.0,514.0h1v1h-1zM925.0,495.0h1v1h-1zM925.0,477.0h1v1h-1zM925.0,458.0h1v1h-1zM925.0,439.0h1v1h-1zM925.0,420.0h1v1h-1zM925.0,401.0h1v1h-1zM925.0,382.0h1v1h-1zM925.0,364.0h1v1h-1zM925.0,345.0h1v1h-1zM925.0,326.0h1v1h-1zM925.0,307.0h1v1h-1zM925.0,288.0h1v1h-1zM925.0,269.0h1v1h-1zM925.0,251.0h1v1h-1zM925.0,232.0h1v1h-1zM925.0,213.0h1v1h-1zM925.0,194.0h1v1h-1zM925.0,175.0h1v1h-1zM925.0,156.0h1v1h-1zM925.0,138.0h1v1h-1zM925.0,119.0h1v1h-1zM925.0,100.0h1v1h-1zM925.0,81.0h1v1h-1zM925.0,62.0h1v1h-1zM925.0,43.0h1v1h-1zM925.0,25.0h1v1h-1zM925.0,6.0h1v1h-1zM944.0,571.0h1v1h-1zM944.0,552.0h1v1h-1zM944.0,533.0h1v1h-1zM944.0,514.0h1v1h-1zM944.0,495.0h1v1h-1zM944.0,477.0h1v1h-1zM944.0,458.0h1v1h-1zM944.0,439.0h1v1h-1zM944.0,420.0h1v1h-1zM944.0,401.0h1v1h-1zM944.0,382.0h1v1h-1zM944.0,364.0h1v1h-1zM944.0,345.0h1v1h-1zM944.0,326.0h1v1h-1zM944.0,307.0h1v1h-1zM944.0,288.0h1v1h-1zM944.0,269.0h1v1h-1zM944.0,251.0h1v1h-1zM944.0,232.0h1v1h-1zM944.0,213.0h1v1h-1zM944.0,194.0h1v1h-1zM944.0,175.0h1v1h-1zM944.0,156.0h1v1h-1zM944.0,138.0h1v1h-1zM944.0,119.0h1v1h-1zM944.0,100.0h1v1h-1zM944.0,81.0h1v1h-1zM944.0,62.0h1v1h-1zM944.0,43.0h1v1h-1zM944.0,25.0h1v1h-1zM944.0,6.0h1v1h-1zM963.0,571.0h1v1h-1zM963.0,552.0h1v1h-1zM963.0,533.0h1v1h-1zM963.0,514.0h1v1h-1zM963.0,495.0h1v1h-1zM963.0,477.0h1v1h-1zM963.0,458.0h1v1h-1zM963.0,439.0h1v1h-1zM963.0,420.0h1v1h-1zM963.0,401.0h1v1h-1zM963.0,382.0h1v1h-1zM963.0,364.0h1v1h-1zM963.0,345.0h1v1h-1zM963.0,326.0h1v1h-1zM963.0,307.0h1v1h-1zM963.0,288.0h1v1h-1zM963.0,269.0h1v1h-1zM963.0,251.0h1v1h-1zM963.0,232.0h1v1h-1zM963.0,213.0h1v1h-1zM963.0,194.0h1v1h-1zM963.0,175.0h1v1h-1zM963.0,156.0h1v1h-1zM963.0,138.0h1v1h-1zM963.0,119.0h1v1h-1zM963.0,100.0h1v1h-1zM963.0,81.0h1v1h-1zM963.0,62.0h1v1h-1zM963.0,43.0h1v1h-1zM963.0,25.0h1v1h-1zM963.0,6.0h1v1h-1zM982.0,571.0h1v1h-1zM982.0,552.0h1v1h-1zM982.0,533.0h1v1h-1zM982.0,514.0h1v1h-1zM982.0,495.0h1v1h-1zM982.0,477.0h1v1h-1zM982.0,458.0h1v1h-1zM982.0,439.0h1v1h-1zM982.0,420.0h1v1h-1zM982.0,401.0h1v1h-1zM982.0,382.0h1v1h-1zM982.0,364.0h1v1h-1zM982.0,345.0h1v1h-1zM982.0,326.0h1v1h-1zM982.0,307.0h1v1h-1zM982.0,288.0h1v1h-1zM982.0,269.0h1v1h-1zM982.0,251.0h1v1h-1zM982.0,232.0h1v1h-1zM982.0,213.0h1v1h-1zM982.0,194.0h1v1h-1zM982.0,175.0h1v1h-1zM982.0,156.0h1v1h-1zM982.0,138.0h1v1h-1zM982.0,119.0h1v1h-1zM982.0,100.0h1v1h-1zM982.0,81.0h1v1h-1zM982.0,62.0h1v1h-1zM982.0,43.0h1v1h-1zM982.0,25.0h1v1h-1zM982.0,6.0h1v1h-1zM1001.0,571.0h1v1h-1zM1001.0,552.0h1v1h-1zM1001.0,533.0h1v1h-1zM1001.0,514.0h1v1h-1zM1001.0,495.0h1v1h-1zM1001.0,477.0h1v1h-1zM1001.0,458.0h1v1h-1zM1001.0,439.0h1v1h-1zM1001.0,420.0h1v1h-1zM1001.0,401.0h1v1h-1zM1001.0,382.0h1v1h-1zM1001.0,364.0h1v1h-1zM1001.0,345.0h1v1h-1zM1001.0,326.0h1v1h-1zM1001.0,307.0h1v1h-1zM1001.0,288.0h1v1h-1zM1001.0,269.0h1v1h-1zM1001.0,251.0h1v1h-1zM1001.0,232.0h1v1h-1zM1001.0,213.0h1v1h-1zM1001.0,194.0h1v1h-1zM1001.0,175.0h1v1h-1zM1001.0,156.0h1v1h-1zM1001.0,138.0h1v1h-1zM1001.0,119.0h1v1h-1zM1001.0,100.0h1v1h-1zM1001.0,81.0h1v1h-1zM1001.0,62.0h1v1h-1zM1001.0,43.0h1v1h-1zM1001.0,25.0h1v1h-1zM1001.0,6.0h1v1h-1zM1020.0,571.0h1v1h-1zM1020.0,552.0h1v1h-1zM1020.0,533.0h1v1h-1zM1020.0,514.0h1v1h-1zM1020.0,495.0h1v1h-1zM1020.0,477.0h1v1h-1zM1020.0,458.0h1v1h-1zM1020.0,439.0h1v1h-1zM1020.0,420.0h1v1h-1zM1020.0,401.0h1v1h-1zM1020.0,382.0h1v1h-1zM1020.0,364.0h1v1h-1zM1020.0,345.0h1v1h-1zM1020.0,326.0h1v1h-1zM1020.0,307.0h1v1h-1zM1020.0,288.0h1v1h-1zM1020.0,269.0h1v1h-1zM1020.0,251.0h1v1h-1zM1020.0,232.0h1v1h-1zM1020.0,213.0h1v1h-1zM1020.0,194.0h1v1h-1zM1020.0,175.0h1v1h-1zM1020.0,156.0h1v1h-1zM1020.0,138.0h1v1h-1zM1020.0,119.0h1v1h-1zM1020.0,100.0h1v1h-1zM1020.0,81.0h1v1h-1zM1020.0,62.0h1v1h-1zM1020.0,43.0h1v1h-1zM1020.0,25.0h1v1h-1zM1020.0,6.0h1v1h-1z" fill="#454545"/><circle cx="511.5" cy="288.5" r="188" fill="none" stroke="#c4c4c4" stroke-width="0.9"/><circle cx="511.5" cy="288.5" r="169.3" fill="none" stroke="#c4c4c4" stroke-width="0.9"/><circle cx="511.5" cy="288.5" r="158" fill="none" stroke="#6a2424" stroke-width="1"/><circle cx="511.5" cy="288.5" r="147" fill="none" stroke="#6a2424" stroke-width="1"/><text transform="translate(572.6 194.2) scale(.92 1)" x="0" y="0" font-family="Liberation Serif" font-size="33" text-anchor="middle" fill="#7a3430">1</text><text transform="translate(617.3 238.9) scale(.92 1)" x="0" y="0" font-family="Liberation Serif" font-size="33" text-anchor="middle" fill="#7a3430">2</text><text transform="translate(633.7 300.0) scale(.92 1)" x="0" y="0" font-family="Liberation Serif" font-size="33" text-anchor="middle" fill="#7a3430">3</text><text transform="translate(617.3 361.1) scale(.92 1)" x="0" y="0" font-family="Liberation Serif" font-size="33" text-anchor="middle" fill="#7a3430">4</text><text transform="translate(572.6 405.8) scale(.92 1)" x="0" y="0" font-family="Liberation Serif" font-size="33" text-anchor="middle" fill="#7a3430">5</text><text transform="translate(511.5 422.2) scale(.92 1)" x="0" y="0" font-family="Liberation Serif" font-size="33" text-anchor="middle" fill="#7a3430">6</text><text transform="translate(450.4 405.8) scale(.92 1)" x="0" y="0" font-family="Liberation Serif" font-size="33" text-anchor="middle" fill="#7a3430">7</text><text transform="translate(405.7 361.1) scale(.92 1)" x="0" y="0" font-family="Liberation Serif" font-size="33" text-anchor="middle" fill="#7a3430">8</text><text transform="translate(389.3 300.0) scale(.92 1)" x="0" y="0" font-family="Liberation Serif" font-size="33" text-anchor="middle" fill="#7a3430">9</text><text transform="translate(405.7 238.9) scale(.92 1)" x="0" y="0" font-family="Liberation Serif" font-size="33" text-anchor="middle" fill="#7a3430">10</text><text transform="translate(450.4 194.2) scale(.92 1)" x="0" y="0" font-family="Liberation Serif" font-size="33" text-anchor="middle" fill="#7a3430">11</text><text transform="translate(511.5 177.8) scale(.92 1)" x="0" y="0" font-family="Liberation Serif" font-size="33" text-anchor="middle" fill="#7a3430">12</text><rect x="574.7" y="283.5" width="10" height="10" fill="#0000c0" stroke="#8a8a9a" stroke-width="1"/><rect x="574.4" y="289.4" width="10" height="10" fill="#0000c0" stroke="#8a8a9a" stroke-width="1"/><rect x="573.7" y="295.3" width="10" height="10" fill="#0000c0" stroke="#8a8a9a" stroke-width="1"/><rect x="572.4" y="301.2" width="10" height="10" fill="#0000c0" stroke="#8a8a9a" stroke-width="1"/><rect x="570.6" y="306.8" width="10" height="10" fill="#0000c0" stroke="#8a8a9a" stroke-width="1"/><rect x="568.3" y="312.3" width="10" height="10" fill="#0000c0" stroke="#8a8a9a" stroke-width="1"/><rect x="565.6" y="317.6" width="10" height="10" fill="#0000c0" stroke="#8a8a9a" stroke-width="1"/><rect x="562.4" y="322.6" width="10" height="10" fill="#0000c0" stroke="#8a8a9a" stroke-width="1"/><rect x="558.7" y="327.3" width="10" height="10" fill="#0000c0" stroke="#8a8a9a" stroke-width="1"/><rect x="554.7" y="331.7" width="10" height="10" fill="#0000c0" stroke="#8a8a9a" stroke-width="1"/><rect x="550.3" y="335.7" width="10" height="10" fill="#0000c0" stroke="#8a8a9a" stroke-width="1"/><rect x="545.6" y="339.4" width="10" height="10" fill="#0000c0" stroke="#8a8a9a" stroke-width="1"/><rect x="540.6" y="342.6" width="10" height="10" fill="#0000c0" stroke="#8a8a9a" stroke-width="1"/><rect x="535.3" y="345.3" width="10" height="10" fill="#0000c0" stroke="#8a8a9a" stroke-width="1"/><rect x="529.8" y="347.6" width="10" height="10" fill="#0000c0" stroke="#8a8a9a" stroke-width="1"/><rect x="524.2" y="349.4" width="10" height="10" fill="#0000c0" stroke="#8a8a9a" stroke-width="1"/><rect x="518.3" y="350.7" width="10" height="10" fill="#0000c0" stroke="#8a8a9a" stroke-width="1"/><rect x="512.4" y="351.4" width="10" height="10" fill="#0000c0" stroke="#8a8a9a" stroke-width="1"/><rect x="506.5" y="351.7" width="10" height="10" fill="#0000c0" stroke="#8a8a9a" stroke-width="1"/><rect x="500.6" y="351.4" width="10" height="10" fill="#0000c0" stroke="#8a8a9a" stroke-width="1"/><rect x="494.7" y="350.7" width="10" height="10" fill="#0000c0" stroke="#8a8a9a" stroke-width="1"/><rect x="488.8" y="349.4" width="10" height="10" fill="#0000c0" stroke="#8a8a9a" stroke-width="1"/><rect x="483.2" y="347.6" width="10" height="10" fill="#0000c0" stroke="#8a8a9a" stroke-width="1"/><rect x="477.7" y="345.3" width="10" height="10" fill="#0000c0" stroke="#8a8a9a" stroke-width="1"/><rect x="472.4" y="342.6" width="10" height="10" fill="#0000c0" stroke="#8a8a9a" stroke-width="1"/><rect x="467.4" y="339.4" width="10" height="10" fill="#0000c0" stroke="#8a8a9a" stroke-width="1"/><rect x="462.7" y="335.7" width="10" height="10" fill="#0000c0" stroke="#8a8a9a" stroke-width="1"/><rect x="458.3" y="331.7" width="10" height="10" fill="#0000c0" stroke="#8a8a9a" stroke-width="1"/><rect x="454.3" y="327.3" width="10" height="10" fill="#0000c0" stroke="#8a8a9a" stroke-width="1"/><rect x="450.6" y="322.6" width="10" height="10" fill="#0000c0" stroke="#8a8a9a" stroke-width="1"/><rect x="447.4" y="317.6" width="10" height="10" fill="#0000c0" stroke="#8a8a9a" stroke-width="1"/><rect x="444.7" y="312.3" width="10" height="10" fill="#0000c0" stroke="#8a8a9a" stroke-width="1"/><rect x="442.4" y="306.8" width="10" height="10" fill="#0000c0" stroke="#8a8a9a" stroke-width="1"/><rect x="440.6" y="301.2" width="10" height="10" fill="#0000c0" stroke="#8a8a9a" stroke-width="1"/><rect x="439.3" y="295.3" width="10" height="10" fill="#0000c0" stroke="#8a8a9a" stroke-width="1"/><rect x="438.6" y="289.4" width="10" height="10" fill="#0000c0" stroke="#8a8a9a" stroke-width="1"/><rect x="438.3" y="283.5" width="10" height="10" fill="#0000c0" stroke="#8a8a9a" stroke-width="1"/><rect x="438.6" y="277.6" width="10" height="10" fill="#0000c0" stroke="#8a8a9a" stroke-width="1"/><rect x="439.3" y="271.7" width="10" height="10" fill="#0000c0" stroke="#8a8a9a" stroke-width="1"/><rect x="440.6" y="265.8" width="10" height="10" fill="#0000c0" stroke="#8a8a9a" stroke-width="1"/><rect x="442.4" y="260.2" width="10" height="10" fill="#0000c0" stroke="#8a8a9a" stroke-width="1"/><rect x="444.7" y="254.7" width="10" height="10" fill="#0000c0" stroke="#8a8a9a" stroke-width="1"/><rect x="447.4" y="249.4" width="10" height="10" fill="#0000c0" stroke="#8a8a9a" stroke-width="1"/><rect x="450.6" y="244.4" width="10" height="10" fill="#0000c0" stroke="#8a8a9a" stroke-width="1"/><rect x="454.3" y="239.7" width="10" height="10" fill="#0000c0" stroke="#8a8a9a" stroke-width="1"/><rect x="458.3" y="235.3" width="10" height="10" fill="#0000c0" stroke="#8a8a9a" stroke-width="1"/><rect x="462.7" y="231.3" width="10" height="10" fill="#0000c0" stroke="#8a8a9a" stroke-width="1"/><rect x="467.4" y="227.6" width="10" height="10" fill="#0000c0" stroke="#8a8a9a" stroke-width="1"/><rect x="472.4" y="224.4" width="10" height="10" fill="#0000c0" stroke="#8a8a9a" stroke-width="1"/><rect x="477.7" y="221.7" width="10" height="10" fill="#0000c0" stroke="#8a8a9a" stroke-width="1"/><rect x="483.2" y="219.4" width="10" height="10" fill="#0000c0" stroke="#8a8a9a" stroke-width="1"/><rect x="488.8" y="217.6" width="10" height="10" fill="#0000c0" stroke="#8a8a9a" stroke-width="1"/><rect x="494.7" y="216.3" width="10" height="10" fill="#0000c0" stroke="#8a8a9a" stroke-width="1"/><rect x="500.6" y="215.6" width="10" height="10" fill="#0000c0" stroke="#8a8a9a" stroke-width="1"/><rect x="506.5" y="215.3" width="10" height="10" fill="#0000c0" stroke="#8a8a9a" stroke-width="1"/><rect x="512.4" y="215.6" width="10" height="10" fill="#0000c0" stroke="#8a8a9a" stroke-width="1"/><rect x="518.3" y="216.3" width="10" height="10" fill="#0000c0" stroke="#8a8a9a" stroke-width="1"/><rect x="524.2" y="217.6" width="10" height="10" fill="#0000c0" stroke="#8a8a9a" stroke-width="1"/><rect x="529.8" y="219.4" width="10" height="10" fill="#0000c0" stroke="#8a8a9a" stroke-width="1"/><rect x="535.3" y="221.7" width="10" height="10" fill="#0000c0" stroke="#8a8a9a" stroke-width="1"/><rect x="540.6" y="224.4" width="10" height="10" fill="#0000c0" stroke="#8a8a9a" stroke-width="1"/><rect x="545.6" y="227.6" width="10" height="10" fill="#0000c0" stroke="#8a8a9a" stroke-width="1"/><rect x="550.3" y="231.3" width="10" height="10" fill="#0000c0" stroke="#8a8a9a" stroke-width="1"/><rect x="554.7" y="235.3" width="10" height="10" fill="#0000c0" stroke="#8a8a9a" stroke-width="1"/><rect x="558.7" y="239.7" width="10" height="10" fill="#0000c0" stroke="#8a8a9a" stroke-width="1"/><rect x="562.4" y="244.4" width="10" height="10" fill="#0000c0" stroke="#8a8a9a" stroke-width="1"/><rect x="565.6" y="249.4" width="10" height="10" fill="#0000c0" stroke="#8a8a9a" stroke-width="1"/><rect x="568.3" y="254.7" width="10" height="10" fill="#0000c0" stroke="#8a8a9a" stroke-width="1"/><rect x="570.6" y="260.2" width="10" height="10" fill="#0000c0" stroke="#8a8a9a" stroke-width="1"/><rect x="572.4" y="265.8" width="10" height="10" fill="#0000c0" stroke="#8a8a9a" stroke-width="1"/><rect x="573.7" y="271.7" width="10" height="10" fill="#0000c0" stroke="#8a8a9a" stroke-width="1"/><rect x="574.4" y="277.6" width="10" height="10" fill="#0000c0" stroke="#8a8a9a" stroke-width="1"/><rect x="563.3" y="283.5" width="10" height="10" fill="#c8001e" stroke="#8a8a9a" stroke-width="1"/><rect x="563.1" y="288.5" width="10" height="10" fill="#c8001e" stroke="#8a8a9a" stroke-width="1"/><rect x="562.4" y="293.4" width="10" height="10" fill="#c8001e" stroke="#8a8a9a" stroke-width="1"/><rect x="561.4" y="298.2" width="10" height="10" fill="#c8001e" stroke="#8a8a9a" stroke-width="1"/><rect x="559.9" y="302.9" width="10" height="10" fill="#c8001e" stroke="#8a8a9a" stroke-width="1"/><rect x="558.0" y="307.5" width="10" height="10" fill="#c8001e" stroke="#8a8a9a" stroke-width="1"/><rect x="555.7" y="311.9" width="10" height="10" fill="#c8001e" stroke="#8a8a9a" stroke-width="1"/><rect x="553.0" y="316.1" width="10" height="10" fill="#c8001e" stroke="#8a8a9a" stroke-width="1"/><rect x="550.0" y="320.0" width="10" height="10" fill="#c8001e" stroke="#8a8a9a" stroke-width="1"/><rect x="546.7" y="323.7" width="10" height="10" fill="#c8001e" stroke="#8a8a9a" stroke-width="1"/><rect x="543.0" y="327.0" width="10" height="10" fill="#c8001e" stroke="#8a8a9a" stroke-width="1"/><rect x="539.1" y="330.0" width="10" height="10" fill="#c8001e" stroke="#8a8a9a" stroke-width="1"/><rect x="534.9" y="332.7" width="10" height="10" fill="#c8001e" stroke="#8a8a9a" stroke-width="1"/><rect x="530.5" y="335.0" width="10" height="10" fill="#c8001e" stroke="#8a8a9a" stroke-width="1"/><rect x="525.9" y="336.9" width="10" height="10" fill="#c8001e" stroke="#8a8a9a" stroke-width="1"/><rect x="521.2" y="338.4" width="10" height="10" fill="#c8001e" stroke="#8a8a9a" stroke-width="1"/><rect x="516.4" y="339.4" width="10" height="10" fill="#c8001e" stroke="#8a8a9a" stroke-width="1"/><rect x="511.5" y="340.1" width="10" height="10" fill="#c8001e" stroke="#8a8a9a" stroke-width="1"/><rect x="506.5" y="340.3" width="10" height="10" fill="#c8001e" stroke="#8a8a9a" stroke-width="1"/><rect x="501.5" y="340.1" width="10" height="10" fill="#c8001e" stroke="#8a8a9a" stroke-width="1"/><rect x="496.6" y="339.4" width="10" height="10" fill="#c8001e" stroke="#8a8a9a" stroke-width="1"/><rect x="491.8" y="338.4" width="10" height="10" fill="#c8001e" stroke="#8a8a9a" stroke-width="1"/><rect x="487.1" y="336.9" width="10" height="10" fill="#c8001e" stroke="#8a8a9a" stroke-width="1"/><rect x="482.5" y="335.0" width="10" height="10" fill="#c8001e" stroke="#8a8a9a" stroke-width="1"/><rect x="478.1" y="332.7" width="10" height="10" fill="#c8001e" stroke="#8a8a9a" stroke-width="1"/><rect x="473.9" y="330.0" width="10" height="10" fill="#c8001e" stroke="#8a8a9a" stroke-width="1"/><rect x="470.0" y="327.0" width="10" height="10" fill="#c8001e" stroke="#8a8a9a" stroke-width="1"/><rect x="466.3" y="323.7" width="10" height="10" fill="#c8001e" stroke="#8a8a9a" stroke-width="1"/><rect x="463.0" y="320.0" width="10" height="10" fill="#c8001e" stroke="#8a8a9a" stroke-width="1"/><rect x="460.0" y="316.1" width="10" height="10" fill="#c8001e" stroke="#8a8a9a" stroke-width="1"/><rect x="457.3" y="311.9" width="10" height="10" fill="#c8001e" stroke="#8a8a9a" stroke-width="1"/><rect x="455.0" y="307.5" width="10" height="10" fill="#c8001e" stroke="#8a8a9a" stroke-width="1"/><rect x="453.1" y="302.9" width="10" height="10" fill="#c8001e" stroke="#8a8a9a" stroke-width="1"/><rect x="451.6" y="298.2" width="10" height="10" fill="#c8001e" stroke="#8a8a9a" stroke-width="1"/><rect x="450.6" y="293.4" width="10" height="10" fill="#c8001e" stroke="#8a8a9a" stroke-width="1"/><rect x="449.9" y="288.5" width="10" height="10" fill="#c8001e" stroke="#8a8a9a" stroke-width="1"/><rect x="449.7" y="283.5" width="10" height="10" fill="#c8001e" stroke="#8a8a9a" stroke-width="1"/><rect x="449.9" y="278.5" width="10" height="10" fill="#c8001e" stroke="#8a8a9a" stroke-width="1"/><rect x="450.6" y="273.6" width="10" height="10" fill="#c8001e" stroke="#8a8a9a" stroke-width="1"/><rect x="451.6" y="268.8" width="10" height="10" fill="#c8001e" stroke="#8a8a9a" stroke-width="1"/><rect x="453.1" y="264.1" width="10" height="10" fill="#c8001e" stroke="#8a8a9a" stroke-width="1"/><rect x="455.0" y="259.5" width="10" height="10" fill="#c8001e" stroke="#8a8a9a" stroke-width="1"/><rect x="457.3" y="255.1" width="10" height="10" fill="#c8001e" stroke="#8a8a9a" stroke-width="1"/><rect x="460.0" y="250.9" width="10" height="10" fill="#c8001e" stroke="#8a8a9a" stroke-width="1"/><rect x="463.0" y="247.0" width="10" height="10" fill="#c8001e" stroke="#8a8a9a" stroke-width="1"/><rect x="466.3" y="243.3" width="10" height="10" fill="#c8001e" stroke="#8a8a9a" stroke-width="1"/><rect x="470.0" y="240.0" width="10" height="10" fill="#c8001e" stroke="#8a8a9a" stroke-width="1"/><rect x="473.9" y="237.0" width="10" height="10" fill="#c8001e" stroke="#8a8a9a" stroke-width="1"/><rect x="478.1" y="234.3" width="10" height="10" fill="#c8001e" stroke="#8a8a9a" stroke-width="1"/><rect x="482.5" y="232.0" width="10" height="10" fill="#c8001e" stroke="#8a8a9a" stroke-width="1"/><rect x="487.1" y="230.1" width="10" height="10" fill="#c8001e" stroke="#8a8a9a" stroke-width="1"/><rect x="491.8" y="228.6" width="10" height="10" fill="#c8001e" stroke="#8a8a9a" stroke-width="1"/><rect x="496.6" y="227.6" width="10" height="10" fill="#c8001e" stroke="#8a8a9a" stroke-width="1"/><rect x="501.5" y="226.9" width="10" height="10" fill="#c8001e" stroke="#8a8a9a" stroke-width="1"/><rect x="506.5" y="226.7" width="10" height="10" fill="#c8001e" stroke="#8a8a9a" stroke-width="1"/><rect x="511.5" y="226.9" width="10" height="10" fill="#c8001e" stroke="#8a8a9a" stroke-width="1"/><rect x="516.4" y="227.6" width="10" height="10" fill="#c8001e" stroke="#8a8a9a" stroke-width="1"/><rect x="521.2" y="228.6" width="10" height="10" fill="#c8001e" stroke="#8a8a9a" stroke-width="1"/><rect x="525.9" y="230.1" width="10" height="10" fill="#c8001e" stroke="#8a8a9a" stroke-width="1"/><rect x="530.5" y="232.0" width="10" height="10" fill="#c8001e" stroke="#8a8a9a" stroke-width="1"/><rect x="534.9" y="234.3" width="10" height="10" fill="#c8001e" stroke="#8a8a9a" stroke-width="1"/><rect x="539.1" y="237.0" width="10" height="10" fill="#c8001e" stroke="#8a8a9a" stroke-width="1"/><rect x="543.0" y="240.0" width="10" height="10" fill="#c8001e" stroke="#8a8a9a" stroke-width="1"/><rect x="546.7" y="243.3" width="10" height="10" fill="#c8001e" stroke="#8a8a9a" stroke-width="1"/><rect x="550.0" y="247.0" width="10" height="10" fill="#c8001e" stroke="#8a8a9a" stroke-width="1"/><rect x="553.0" y="250.9" width="10" height="10" fill="#c8001e" stroke="#8a8a9a" stroke-width="1"/><rect x="555.7" y="255.1" width="10" height="10" fill="#c8001e" stroke="#8a8a9a" stroke-width="1"/><rect x="558.0" y="259.5" width="10" height="10" fill="#c8001e" stroke="#8a8a9a" stroke-width="1"/><rect x="559.9" y="264.1" width="10" height="10" fill="#c8001e" stroke="#8a8a9a" stroke-width="1"/><rect x="561.4" y="268.8" width="10" height="10" fill="#c8001e" stroke="#8a8a9a" stroke-width="1"/><rect x="562.4" y="273.6" width="10" height="10" fill="#c8001e" stroke="#8a8a9a" stroke-width="1"/><rect x="563.1" y="278.5" width="10" height="10" fill="#c8001e" stroke="#8a8a9a" stroke-width="1"/><rect x="506.5" y="121.5" width="10" height="10" fill="#0000c0" stroke="#8a8a9a" stroke-width="1"/><rect x="506.5" y="140.5" width="10" height="10" fill="#0000c0" stroke="#8a8a9a" stroke-width="1"/><rect x="502.0" y="131.0" width="10" height="10" fill="#0000c0" stroke="#8a8a9a" stroke-width="1"/><rect x="511.0" y="131.0" width="10" height="10" fill="#0000c0" stroke="#8a8a9a" stroke-width="1"/><rect x="521.9" y="137.3" width="10" height="10" fill="#c8001e" stroke="#8a8a9a" stroke-width="1"/><rect x="523.0" y="126.4" width="10" height="10" fill="#0000c0" stroke="#8a8a9a" stroke-width="1"/><rect x="537.1" y="139.7" width="10" height="10" fill="#c8001e" stroke="#8a8a9a" stroke-width="1"/><rect x="539.4" y="129.0" width="10" height="10" fill="#0000c0" stroke="#8a8a9a" stroke-width="1"/><rect x="551.9" y="143.7" width="10" height="10" fill="#c8001e" stroke="#8a8a9a" stroke-width="1"/><rect x="555.3" y="133.2" width="10" height="10" fill="#0000c0" stroke="#8a8a9a" stroke-width="1"/><rect x="566.3" y="149.2" width="10" height="10" fill="#c8001e" stroke="#8a8a9a" stroke-width="1"/><rect x="570.8" y="139.2" width="10" height="10" fill="#0000c0" stroke="#8a8a9a" stroke-width="1"/><rect x="587.5" y="143.2" width="10" height="10" fill="#0000c0" stroke="#8a8a9a" stroke-width="1"/><rect x="578.0" y="159.7" width="10" height="10" fill="#0000c0" stroke="#8a8a9a" stroke-width="1"/><rect x="578.9" y="149.2" width="10" height="10" fill="#0000c0" stroke="#8a8a9a" stroke-width="1"/><rect x="586.6" y="153.7" width="10" height="10" fill="#0000c0" stroke="#8a8a9a" stroke-width="1"/><rect x="592.9" y="164.6" width="10" height="10" fill="#c8001e" stroke="#8a8a9a" stroke-width="1"/><rect x="599.4" y="155.7" width="10" height="10" fill="#0000c0" stroke="#8a8a9a" stroke-width="1"/><rect x="604.9" y="174.3" width="10" height="10" fill="#c8001e" stroke="#8a8a9a" stroke-width="1"/><rect x="612.2" y="166.1" width="10" height="10" fill="#0000c0" stroke="#8a8a9a" stroke-width="1"/><rect x="615.7" y="185.1" width="10" height="10" fill="#c8001e" stroke="#8a8a9a" stroke-width="1"/><rect x="623.9" y="177.8" width="10" height="10" fill="#0000c0" stroke="#8a8a9a" stroke-width="1"/><rect x="625.4" y="197.1" width="10" height="10" fill="#c8001e" stroke="#8a8a9a" stroke-width="1"/><rect x="634.3" y="190.6" width="10" height="10" fill="#0000c0" stroke="#8a8a9a" stroke-width="1"/><rect x="646.8" y="202.5" width="10" height="10" fill="#0000c0" stroke="#8a8a9a" stroke-width="1"/><rect x="630.3" y="212.0" width="10" height="10" fill="#0000c0" stroke="#8a8a9a" stroke-width="1"/><rect x="636.3" y="203.4" width="10" height="10" fill="#0000c0" stroke="#8a8a9a" stroke-width="1"/><rect x="640.8" y="211.1" width="10" height="10" fill="#0000c0" stroke="#8a8a9a" stroke-width="1"/><rect x="640.8" y="223.7" width="10" height="10" fill="#c8001e" stroke="#8a8a9a" stroke-width="1"/><rect x="650.8" y="219.2" width="10" height="10" fill="#0000c0" stroke="#8a8a9a" stroke-width="1"/><rect x="646.3" y="238.1" width="10" height="10" fill="#c8001e" stroke="#8a8a9a" stroke-width="1"/><rect x="656.8" y="234.7" width="10" height="10" fill="#0000c0" stroke="#8a8a9a" stroke-width="1"/><rect x="650.3" y="252.9" width="10" height="10" fill="#c8001e" stroke="#8a8a9a" stroke-width="1"/><rect x="661.0" y="250.6" width="10" height="10" fill="#0000c0" stroke="#8a8a9a" stroke-width="1"/><rect x="652.7" y="268.1" width="10" height="10" fill="#c8001e" stroke="#8a8a9a" stroke-width="1"/><rect x="663.6" y="267.0" width="10" height="10" fill="#0000c0" stroke="#8a8a9a" stroke-width="1"/><rect x="668.5" y="283.5" width="10" height="10" fill="#0000c0" stroke="#8a8a9a" stroke-width="1"/><rect x="649.5" y="283.5" width="10" height="10" fill="#0000c0" stroke="#8a8a9a" stroke-width="1"/><rect x="659.0" y="279.0" width="10" height="10" fill="#0000c0" stroke="#8a8a9a" stroke-width="1"/><rect x="659.0" y="288.0" width="10" height="10" fill="#0000c0" stroke="#8a8a9a" stroke-width="1"/><rect x="652.7" y="298.9" width="10" height="10" fill="#c8001e" stroke="#8a8a9a" stroke-width="1"/><rect x="663.6" y="300.0" width="10" height="10" fill="#0000c0" stroke="#8a8a9a" stroke-width="1"/><rect x="650.3" y="314.1" width="10" height="10" fill="#c8001e" stroke="#8a8a9a" stroke-width="1"/><rect x="661.0" y="316.4" width="10" height="10" fill="#0000c0" stroke="#8a8a9a" stroke-width="1"/><rect x="646.3" y="328.9" width="10" height="10" fill="#c8001e" stroke="#8a8a9a" stroke-width="1"/><rect x="656.8" y="332.3" width="10" height="10" fill="#0000c0" stroke="#8a8a9a" stroke-width="1"/><rect x="640.8" y="343.3" width="10" height="10" fill="#c8001e" stroke="#8a8a9a" stroke-width="1"/><rect x="650.8" y="347.8" width="10" height="10" fill="#0000c0" stroke="#8a8a9a" stroke-width="1"/><rect x="646.8" y="364.5" width="10" height="10" fill="#0000c0" stroke="#8a8a9a" stroke-width="1"/><rect x="630.3" y="355.0" width="10" height="10" fill="#0000c0" stroke="#8a8a9a" stroke-width="1"/><rect x="640.8" y="355.9" width="10" height="10" fill="#0000c0" stroke="#8a8a9a" stroke-width="1"/><rect x="636.3" y="363.6" width="10" height="10" fill="#0000c0" stroke="#8a8a9a" stroke-width="1"/><rect x="625.4" y="369.9" width="10" height="10" fill="#c8001e" stroke="#8a8a9a" stroke-width="1"/><rect x="634.3" y="376.4" width="10" height="10" fill="#0000c0" stroke="#8a8a9a" stroke-width="1"/><rect x="615.7" y="381.9" width="10" height="10" fill="#c8001e" stroke="#8a8a9a" stroke-width="1"/><rect x="623.9" y="389.2" width="10" height="10" fill="#0000c0" stroke="#8a8a9a" stroke-width="1"/><rect x="604.9" y="392.7" width="10" height="10" fill="#c8001e" stroke="#8a8a9a" stroke-width="1"/><rect x="612.2" y="400.9" width="10" height="10" fill="#0000c0" stroke="#8a8a9a" stroke-width="1"/><rect x="592.9" y="402.4" width="10" height="10" fill="#c8001e" stroke="#8a8a9a" stroke-width="1"/><rect x="599.4" y="411.3" width="10" height="10" fill="#0000c0" stroke="#8a8a9a" stroke-width="1"/><rect x="587.5" y="423.8" width="10" height="10" fill="#0000c0" stroke="#8a8a9a" stroke-width="1"/><rect x="578.0" y="407.3" width="10" height="10" fill="#0000c0" stroke="#8a8a9a" stroke-width="1"/><rect x="586.6" y="413.3" width="10" height="10" fill="#0000c0" stroke="#8a8a9a" stroke-width="1"/><rect x="578.9" y="417.8" width="10" height="10" fill="#0000c0" stroke="#8a8a9a" stroke-width="1"/><rect x="566.3" y="417.8" width="10" height="10" fill="#c8001e" stroke="#8a8a9a" stroke-width="1"/><rect x="570.8" y="427.8" width="10" height="10" fill="#0000c0" stroke="#8a8a9a" stroke-width="1"/><rect x="551.9" y="423.3" width="10" height="10" fill="#c8001e" stroke="#8a8a9a" stroke-width="1"/><rect x="555.3" y="433.8" width="10" height="10" fill="#0000c0" stroke="#8a8a9a" stroke-width="1"/><rect x="537.1" y="427.3" width="10" height="10" fill="#c8001e" stroke="#8a8a9a" stroke-width="1"/><rect x="539.4" y="438.0" width="10" height="10" fill="#0000c0" stroke="#8a8a9a" stroke-width="1"/><rect x="521.9" y="429.7" width="10" height="10" fill="#c8001e" stroke="#8a8a9a" stroke-width="1"/><rect x="523.0" y="440.6" width="10" height="10" fill="#0000c0" stroke="#8a8a9a" stroke-width="1"/><rect x="506.5" y="445.5" width="10" height="10" fill="#0000c0" stroke="#8a8a9a" stroke-width="1"/><rect x="506.5" y="426.5" width="10" height="10" fill="#0000c0" stroke="#8a8a9a" stroke-width="1"/><rect x="511.0" y="436.0" width="10" height="10" fill="#0000c0" stroke="#8a8a9a" stroke-width="1"/><rect x="502.0" y="436.0" width="10" height="10" fill="#0000c0" stroke="#8a8a9a" stroke-width="1"/><rect x="491.1" y="429.7" width="10" height="10" fill="#c8001e" stroke="#8a8a9a" stroke-width="1"/><rect x="490.0" y="440.6" width="10" height="10" fill="#0000c0" stroke="#8a8a9a" stroke-width="1"/><rect x="475.9" y="427.3" width="10" height="10" fill="#c8001e" stroke="#8a8a9a" stroke-width="1"/><rect x="473.6" y="438.0" width="10" height="10" fill="#0000c0" stroke="#8a8a9a" stroke-width="1"/><rect x="461.1" y="423.3" width="10" height="10" fill="#c8001e" stroke="#8a8a9a" stroke-width="1"/><rect x="457.7" y="433.8" width="10" height="10" fill="#0000c0" stroke="#8a8a9a" stroke-width="1"/><rect x="446.7" y="417.8" width="10" height="10" fill="#c8001e" stroke="#8a8a9a" stroke-width="1"/><rect x="442.2" y="427.8" width="10" height="10" fill="#0000c0" stroke="#8a8a9a" stroke-width="1"/><rect x="425.5" y="423.8" width="10" height="10" fill="#0000c0" stroke="#8a8a9a" stroke-width="1"/><rect x="435.0" y="407.3" width="10" height="10" fill="#0000c0" stroke="#8a8a9a" stroke-width="1"/><rect x="434.1" y="417.8" width="10" height="10" fill="#0000c0" stroke="#8a8a9a" stroke-width="1"/><rect x="426.4" y="413.3" width="10" height="10" fill="#0000c0" stroke="#8a8a9a" stroke-width="1"/><rect x="420.1" y="402.4" width="10" height="10" fill="#c8001e" stroke="#8a8a9a" stroke-width="1"/><rect x="413.6" y="411.3" width="10" height="10" fill="#0000c0" stroke="#8a8a9a" stroke-width="1"/><rect x="408.1" y="392.7" width="10" height="10" fill="#c8001e" stroke="#8a8a9a" stroke-width="1"/><rect x="400.8" y="400.9" width="10" height="10" fill="#0000c0" stroke="#8a8a9a" stroke-width="1"/><rect x="397.3" y="381.9" width="10" height="10" fill="#c8001e" stroke="#8a8a9a" stroke-width="1"/><rect x="389.1" y="389.2" width="10" height="10" fill="#0000c0" stroke="#8a8a9a" stroke-width="1"/><rect x="387.6" y="369.9" width="10" height="10" fill="#c8001e" stroke="#8a8a9a" stroke-width="1"/><rect x="378.7" y="376.4" width="10" height="10" fill="#0000c0" stroke="#8a8a9a" stroke-width="1"/><rect x="366.2" y="364.5" width="10" height="10" fill="#0000c0" stroke="#8a8a9a" stroke-width="1"/><rect x="382.7" y="355.0" width="10" height="10" fill="#0000c0" stroke="#8a8a9a" stroke-width="1"/><rect x="376.7" y="363.6" width="10" height="10" fill="#0000c0" stroke="#8a8a9a" stroke-width="1"/><rect x="372.2" y="355.9" width="10" height="10" fill="#0000c0" stroke="#8a8a9a" stroke-width="1"/><rect x="372.2" y="343.3" width="10" height="10" fill="#c8001e" stroke="#8a8a9a" stroke-width="1"/><rect x="362.2" y="347.8" width="10" height="10" fill="#0000c0" stroke="#8a8a9a" stroke-width="1"/><rect x="366.7" y="328.9" width="10" height="10" fill="#c8001e" stroke="#8a8a9a" stroke-width="1"/><rect x="356.2" y="332.3" width="10" height="10" fill="#0000c0" stroke="#8a8a9a" stroke-width="1"/><rect x="362.7" y="314.1" width="10" height="10" fill="#c8001e" stroke="#8a8a9a" stroke-width="1"/><rect x="352.0" y="316.4" width="10" height="10" fill="#0000c0" stroke="#8a8a9a" stroke-width="1"/><rect x="360.3" y="298.9" width="10" height="10" fill="#c8001e" stroke="#8a8a9a" stroke-width="1"/><rect x="349.4" y="300.0" width="10" height="10" fill="#0000c0" stroke="#8a8a9a" stroke-width="1"/><rect x="344.5" y="283.5" width="10" height="10" fill="#0000c0" stroke="#8a8a9a" stroke-width="1"/><rect x="363.5" y="283.5" width="10" height="10" fill="#0000c0" stroke="#8a8a9a" stroke-width="1"/><rect x="354.0" y="288.0" width="10" height="10" fill="#0000c0" stroke="#8a8a9a" stroke-width="1"/><rect x="354.0" y="279.0" width="10" height="10" fill="#0000c0" stroke="#8a8a9a" stroke-width="1"/><rect x="360.3" y="268.1" width="10" height="10" fill="#c8001e" stroke="#8a8a9a" stroke-width="1"/><rect x="349.4" y="267.0" width="10" height="10" fill="#0000c0" stroke="#8a8a9a" stroke-width="1"/><rect x="362.7" y="252.9" width="10" height="10" fill="#c8001e" stroke="#8a8a9a" stroke-width="1"/><rect x="352.0" y="250.6" width="10" height="10" fill="#0000c0" stroke="#8a8a9a" stroke-width="1"/><rect x="366.7" y="238.1" width="10" height="10" fill="#c8001e" stroke="#8a8a9a" stroke-width="1"/><rect x="356.2" y="234.7" width="10" height="10" fill="#0000c0" stroke="#8a8a9a" stroke-width="1"/><rect x="372.2" y="223.7" width="10" height="10" fill="#c8001e" stroke="#8a8a9a" stroke-width="1"/><rect x="362.2" y="219.2" width="10" height="10" fill="#0000c0" stroke="#8a8a9a" stroke-width="1"/><rect x="366.2" y="202.5" width="10" height="10" fill="#0000c0" stroke="#8a8a9a" stroke-width="1"/><rect x="382.7" y="212.0" width="10" height="10" fill="#0000c0" stroke="#8a8a9a" stroke-width="1"/><rect x="372.2" y="211.1" width="10" height="10" fill="#0000c0" stroke="#8a8a9a" stroke-width="1"/><rect x="376.7" y="203.4" width="10" height="10" fill="#0000c0" stroke="#8a8a9a" stroke-width="1"/><rect x="387.6" y="197.1" width="10" height="10" fill="#c8001e" stroke="#8a8a9a" stroke-width="1"/><rect x="378.7" y="190.6" width="10" height="10" fill="#0000c0" stroke="#8a8a9a" stroke-width="1"/><rect x="397.3" y="185.1" width="10" height="10" fill="#c8001e" stroke="#8a8a9a" stroke-width="1"/><rect x="389.1" y="177.8" width="10" height="10" fill="#0000c0" stroke="#8a8a9a" stroke-width="1"/><rect x="408.1" y="174.3" width="10" height="10" fill="#c8001e" stroke="#8a8a9a" stroke-width="1"/><rect x="400.8" y="166.1" width="10" height="10" fill="#0000c0" stroke="#8a8a9a" stroke-width="1"/><rect x="420.1" y="164.6" width="10" height="10" fill="#c8001e" stroke="#8a8a9a" stroke-width="1"/><rect x="413.6" y="155.7" width="10" height="10" fill="#0000c0" stroke="#8a8a9a" stroke-width="1"/><rect x="425.5" y="143.2" width="10" height="10" fill="#0000c0" stroke="#8a8a9a" stroke-width="1"/><rect x="435.0" y="159.7" width="10" height="10" fill="#0000c0" stroke="#8a8a9a" stroke-width="1"/><rect x="426.4" y="153.7" width="10" height="10" fill="#0000c0" stroke="#8a8a9a" stroke-width="1"/><rect x="434.1" y="149.2" width="10" height="10" fill="#0000c0" stroke="#8a8a9a" stroke-width="1"/><rect x="446.7" y="149.2" width="10" height="10" fill="#c8001e" stroke="#8a8a9a" stroke-width="1"/><rect x="442.2" y="139.2" width="10" height="10" fill="#0000c0" stroke="#8a8a9a" stroke-width="1"/><rect x="461.1" y="143.7" width="10" height="10" fill="#c8001e" stroke="#8a8a9a" stroke-width="1"/><rect x="457.7" y="133.2" width="10" height="10" fill="#0000c0" stroke="#8a8a9a" stroke-width="1"/><rect x="475.9" y="139.7" width="10" height="10" fill="#c8001e" stroke="#8a8a9a" stroke-width="1"/><rect x="473.6" y="129.0" width="10" height="10" fill="#0000c0" stroke="#8a8a9a" stroke-width="1"/><rect x="491.1" y="137.3" width="10" height="10" fill="#c8001e" stroke="#8a8a9a" stroke-width="1"/><rect x="490.0" y="126.4" width="10" height="10" fill="#0000c0" stroke="#8a8a9a" stroke-width="1"/><rect x="567.6" y="177.7" width="10" height="10" fill="#0000c0" stroke="#8a8a9a" stroke-width="1"/><rect x="612.3" y="222.4" width="10" height="10" fill="#0000c0" stroke="#8a8a9a" stroke-width="1"/><rect x="628.7" y="283.5" width="10" height="10" fill="#0000c0" stroke="#8a8a9a" stroke-width="1"/><rect x="612.3" y="344.6" width="10" height="10" fill="#0000c0" stroke="#8a8a9a" stroke-width="1"/><rect x="567.6" y="389.3" width="10" height="10" fill="#0000c0" stroke="#8a8a9a" stroke-width="1"/><rect x="506.5" y="405.7" width="10" height="10" fill="#0000c0" stroke="#8a8a9a" stroke-width="1"/><rect x="445.4" y="389.3" width="10" height="10" fill="#0000c0" stroke="#8a8a9a" stroke-width="1"/><rect x="400.7" y="344.6" width="10" height="10" fill="#0000c0" stroke="#8a8a9a" stroke-width="1"/><rect x="384.3" y="283.5" width="10" height="10" fill="#0000c0" stroke="#8a8a9a" stroke-width="1"/><rect x="400.7" y="222.4" width="10" height="10" fill="#0000c0" stroke="#8a8a9a" stroke-width="1"/><rect x="445.4" y="177.7" width="10" height="10" fill="#0000c0" stroke="#8a8a9a" stroke-width="1"/><rect x="506.5" y="161.3" width="10" height="10" fill="#0000c0" stroke="#8a8a9a" stroke-width="1"/><path d="M303.4,476.29999999999995 L343.4,476.29999999999995 M323.4,456.29999999999995 L323.4,496.29999999999995" stroke="#a01010" stroke-width="1"/><circle cx="323.4" cy="476.29999999999995" r="5" fill="none" stroke="#a01010" stroke-width="1"/></svg>
<div class="a" style="left:1118px;top:155px;width:15px;height:577px;background:#fafafa"></div>
<div class="a" style="left:1123px;top:303px;width:8px;height:279px;border-radius:4px;background:#000"></div>
<div class="a" style="left:95px;top:732px;width:968px;height:15px;background:#fafafa"></div>
<div class="a" style="left:72px;top:732px;width:23px;height:15px;background:#ececec"></div>
<div class="a" style="left:162px;top:737px;width:835px;height:8px;border-radius:4px;background:#808080"></div>
<div class="a" style="left:1063px;top:732px;width:70px;height:15px;background:#ececec"></div>
<div class="t" style="right:367px;top:734.5px;font-size:12.7px;color:#111">10 &lt; 100</div>
<div class="a" style="left:72px;top:747.5px;width:1061px;height:23.5px;background:#fff;border-top:1.5px solid #c6c6c6;border-bottom:1.5px solid #c6c6c6"></div>
<div class="t" style="left:77px;top:751px;font-size:13px;color:#1414e0"><i>Commande:</i> line</div>
<div class="a" style="left:72px;top:771px;width:1061px;height:27px;background:#ececec"></div>
<div class="t" style="left:73px;top:779px;font-size:13px;color:#111">Commande :</div>
<div class="a" style="left:153px;top:775.5px;width:954px;height:19px;background:#fff"></div>
<div class="a" style="left:1107px;top:772px;width:26px;height:25px;border:1px solid #bdbdbd;background:linear-gradient(#e8e8e8,#f4f4f4)"></div>
<svg class="a" style="left:1113px;top:779px" width="16" height="12"><rect x=".5" y=".5" width="13" height="10" fill="#e8e8e8" stroke="#333" stroke-width="1"/><rect x="0" y="0" width="14" height="3" fill="#111"/><rect x="10" y="1" width="1" height="1" fill="#fff"/></svg>
<div class="a" style="left:1133px;top:107px;width:12px;height:691px;background:#ebebeb"></div>
<div class="a" style="left:1145px;top:107px;width:10px;height:691px;background:#e3e3e3"></div>
<div class="a" style="left:1155px;top:107px;width:1px;height:691px;background:#d2d2d2"></div>
<div class="a" style="left:1135px;top:314px;width:20px;height:149px;border-radius:3px 0 0 3px;background:#1a7ef7"></div>
<div class="t" style="left:1145px;top:388.5px;font-size:13.5px;color:#fff;transform:translate(-50%,-50%) rotate(-90deg)">Éditeur de propriétés</div>
<div class="a" style="left:1135px;top:469px;width:20px;height:126px;border-radius:3px 0 0 3px;background:#d9d9d9"></div>
<div class="t" style="left:1145px;top:531.5px;font-size:13.5px;color:#333;transform:translate(-50%,-50%) rotate(-90deg)">Liste des calques</div>
<div class="a" style="left:1156px;top:107px;width:298px;height:691px;background:#ececec"></div>
<div class="a" style="left:1156px;top:107px;width:298px;height:23.5px;background:linear-gradient(#ececec,#dcdcdc);border-bottom:1px solid #c8c8c8"></div>
<div class="a" style="left:1454px;top:107px;width:1px;height:691px;background:#d0d0d0"></div>
<svg class="a" style="left:1156px;top:110px" width="36" height="16"><circle cx="8" cy="8" r="7" fill="#646464"/><path d="M5,5 L11,11 M11,5 L5,11" stroke="#f0f0f0" stroke-width="2.3"/><circle cx="26" cy="8" r="7" fill="#646464"/><path d="M23.8,7.2 L23.8,5 L30,5 L30,9.2 L28,9.2" fill="none" stroke="#f0f0f0" stroke-width="1.3"/><rect x="21.6" y="7.6" width="6.2" height="4.6" fill="#646464" stroke="#f0f0f0" stroke-width="1.3"/></svg>
<div class="t" style="left:1267px;top:113.5px;font-size:11.9px;color:#222">Éditeur de propriétés</div>
<div class="lbl" style="left:1168.5px;top:146.5px;font-size:13.3px">Sélection :</div>
<div class="cmb" style="left:1240px;top:143.5px;width:201px;height:21px;padding-left:3.5px;font-size:13.3px">Texte [12]</div>
<div class="a" style="left:1423px;top:146px;width:16px;height:16px;border-radius:4px;background:#1b7bf6"><svg width="16" height="16" style="position:absolute;left:0;top:0"><path d="M5,6.5 L8,3.5 L11,6.5 M5,9.5 L8,12.5 L11,9.5" stroke="#fff" stroke-width="1.5" fill="none" stroke-linecap="round" stroke-linejoin="round"/></svg></div>
<div class="t" style="left:1176px;top:170px;font-size:11.7px;color:#222">Propriétés générales</div>
<div class="a" style="left:1168px;top:183px;width:273px;height:185.5px;border-radius:6px;background:#e3e3e3;box-shadow:inset 0 0 0 .5px #d8d8d8"></div>
<div class="lbl" style="right:206.5px;top:198.5px;">Calque :</div>
<div class="cmb" style="left:1297px;top:196px;width:107px;height:20.5px;padding-left:24.5px"><svg width="16" height="10" style="position:absolute;left:3.5px;top:6px"><rect x=".5" y=".5" width="15" height="9" fill="#fff" stroke="#333" stroke-width="1"/></svg><span style="display:block;overflow:hidden;width:59.5px">0</span></div><div class="a" style="left:1386px;top:198.5px;width:16px;height:16px;border-radius:4px;background:#1b7bf6"><svg width="16" height="16" style="position:absolute;left:0;top:0"><path d="M5,6.5 L8,3.5 L11,6.5 M5,9.5 L8,12.5 L11,9.5" stroke="#fff" stroke-width="1.5" fill="none" stroke-linecap="round" stroke-linejoin="round"/></svg></div>
<div class="a" style="left:1407px;top:193px;width:25.5px;height:26px;border:1px solid #b4b4b4;background:#e6e6e6"></div>
<svg class="a" style="left:1412px;top:200px" width="16" height="12"><path d="M1,1.5 L15,1.5 M1,6 L15,6 M1,10.5 L15,10.5" stroke="#6a6a6a" stroke-width="1.6"/></svg>
<div class="lbl" style="right:206.5px;top:224.5px;">Couleur :</div>
<div class="cmb" style="left:1297px;top:222px;width:135px;height:20.5px;padding-left:24.5px"><svg width="16" height="10" style="position:absolute;left:3.5px;top:6px"><rect x=".5" y=".5" width="15" height="9" fill="#fff" stroke="#333" stroke-width="1"/></svg><span style="display:block;overflow:hidden;width:87.5px">Par calque</span></div><div class="a" style="left:1414px;top:224.5px;width:16px;height:16px;border-radius:4px;background:#1b7bf6"><svg width="16" height="16" style="position:absolute;left:0;top:0"><path d="M5,6.5 L8,3.5 L11,6.5 M5,9.5 L8,12.5 L11,9.5" stroke="#fff" stroke-width="1.5" fill="none" stroke-linecap="round" stroke-linejoin="round"/></svg></div>
<div class="lbl" style="right:206.5px;top:248.5px;">Épaisseur de ligne :</div>
<div class="cmb" style="left:1297px;top:246px;width:135px;height:20.5px;padding-left:24.5px"><svg width="16" height="10" style="position:absolute;left:3.5px;top:6px"><path d="M0,5 L16,5" stroke="#333" stroke-width="1"/></svg><span style="display:block;overflow:hidden;width:87.5px">Par calque</span></div><div class="a" style="left:1414px;top:248.5px;width:16px;height:16px;border-radius:4px;background:#1b7bf6"><svg width="16" height="16" style="position:absolute;left:0;top:0"><path d="M5,6.5 L8,3.5 L11,6.5 M5,9.5 L8,12.5 L11,9.5" stroke="#fff" stroke-width="1.5" fill="none" stroke-linecap="round" stroke-linejoin="round"/></svg></div>
<div class="lbl" style="right:206.5px;top:272.0px;">Type de ligne :</div>
<div class="cmb" style="left:1297px;top:270px;width:135px;height:20.5px;padding-left:3px"><span style="display:block;overflow:hidden;width:109px">Par calque</span></div><div class="a" style="left:1414px;top:272.5px;width:16px;height:16px;border-radius:4px;background:#1b7bf6"><svg width="16" height="16" style="position:absolute;left:0;top:0"><path d="M5,6.5 L8,3.5 L11,6.5 M5,9.5 L8,12.5 L11,9.5" stroke="#fff" stroke-width="1.5" fill="none" stroke-linecap="round" stroke-linejoin="round"/></svg></div>
<div class="lbl" style="right:206.5px;top:296.0px;">Échelle du type :</div>
<div class="fld" style="left:1297px;top:294px;width:135px;height:19.5px;">1</div>
<div class="lbl" style="right:206.5px;top:319.0px;">Ordre de dessin :</div>
<div class="fld" style="left:1297px;top:317px;width:135px;height:19.5px;">*VARIABLE*</div>
<div class="lbl" style="right:206.5px;top:342.0px;">Poignée :</div>
<div class="fld" style="left:1297px;top:340px;width:135px;height:19.5px;color:#b8b8b8;">*VARIABLE*</div>
<div class="t" style="left:1176px;top:374px;font-size:11.7px;color:#222">Propriétés spécifiques</div>
<div class="a" style="left:1168px;top:387px;width:273.5px;height:402.5px;border-radius:6px;background:#e3e3e3;box-shadow:inset 0 0 0 .5px #d8d8d8"></div>
<div class="lbl" style="right:203.5px;top:400.5px;">Simple :</div>
<div class="cmb" style="left:1300px;top:397.75px;width:132px;height:20.5px;padding-left:3px"><span style="display:block;overflow:hidden;width:106px">Non</span></div><div class="a" style="left:1414px;top:400.25px;width:16px;height:16px;border-radius:4px;background:#1b7bf6"><svg width="16" height="16" style="position:absolute;left:0;top:0"><path d="M5,6.5 L8,3.5 L11,6.5 M5,9.5 L8,12.5 L11,9.5" stroke="#fff" stroke-width="1.5" fill="none" stroke-linecap="round" stroke-linejoin="round"/></svg></div>
<div class="lbl" style="right:203.5px;top:424.0px;">Texte :</div>
<div class="fld" style="left:1300px;top:421.75px;width:132px;height:19.5px;">*VARIABLE*</div>
<div class="lbl" style="right:203.5px;top:447.0px;">Texte brut :</div>
<div class="fld" style="left:1300px;top:444.75px;width:132px;height:19.5px;color:#b8b8b8;">*VARIABLE*</div>
<div class="lbl" style="right:203.5px;top:470.5px;">Nom de police :</div>
<div class="cmb" style="left:1300px;top:467.75px;width:132px;height:20.5px;padding-left:3px"><span style="display:block;overflow:hidden;width:106px">Times New Roman</span></div><div class="a" style="left:1414px;top:470.25px;width:16px;height:16px;border-radius:4px;background:#1b7bf6"><svg width="16" height="16" style="position:absolute;left:0;top:0"><path d="M5,6.5 L8,3.5 L11,6.5 M5,9.5 L8,12.5 L11,9.5" stroke="#fff" stroke-width="1.5" fill="none" stroke-linecap="round" stroke-linejoin="round"/></svg></div>
<div class="lbl" style="right:203.5px;top:494.0px;">Hauteur du texte :</div>
<div class="fld" style="left:1300px;top:491.75px;width:132px;height:19.5px;">12</div>
<div class="lbl" style="right:203.5px;top:517.0px;">Largeur du texte :</div>
<div class="fld" style="left:1300px;top:514.75px;width:132px;height:19.5px;">0</div>
<div class="lbl" style="right:203.5px;top:540.0px;">Angle du texte :</div>
<div class="fld" style="left:1300px;top:537.75px;width:132px;height:19.5px;">0</div>
<div class="lbl" style="right:203.5px;top:563.0px;">Echelle X :</div>
<div class="fld" style="left:1300px;top:560.75px;width:132px;height:19.5px;">1</div>
<div class="lbl" style="right:203.5px;top:586.5px;">Gras :</div>
<div class="cmb" style="left:1300px;top:583.75px;width:132px;height:20.5px;padding-left:3px"><span style="display:block;overflow:hidden;width:106px">Non</span></div><div class="a" style="left:1414px;top:586.25px;width:16px;height:16px;border-radius:4px;background:#1b7bf6"><svg width="16" height="16" style="position:absolute;left:0;top:0"><path d="M5,6.5 L8,3.5 L11,6.5 M5,9.5 L8,12.5 L11,9.5" stroke="#fff" stroke-width="1.5" fill="none" stroke-linecap="round" stroke-linejoin="round"/></svg></div>
<div class="lbl" style="right:203.5px;top:610.5px;">Italique :</div>
<div class="cmb" style="left:1300px;top:607.75px;width:132px;height:20.5px;padding-left:3px"><span style="display:block;overflow:hidden;width:106px">Non</span></div><div class="a" style="left:1414px;top:610.25px;width:16px;height:16px;border-radius:4px;background:#1b7bf6"><svg width="16" height="16" style="position:absolute;left:0;top:0"><path d="M5,6.5 L8,3.5 L11,6.5 M5,9.5 L8,12.5 L11,9.5" stroke="#fff" stroke-width="1.5" fill="none" stroke-linecap="round" stroke-linejoin="round"/></svg></div>
<div class="lbl" style="right:203.5px;top:634.0px;">Espacement lignes :</div>
<div class="fld" style="left:1300px;top:631.75px;width:132px;height:19.5px;">1</div>
<div class="lbl" style="right:203.5px;top:674.5px;">X :</div>
<div class="fld" style="left:1300px;top:672.25px;width:132px;height:19.5px;">*VARIABLE*</div>
<div class="lbl" style="right:203.5px;top:698.0px;">Y :</div>
<div class="fld" style="left:1300px;top:695.75px;width:132px;height:19.5px;">*VARIABLE*</div>
<div class="lbl" style="right:203.5px;top:739.5px;">Horizontal :</div>
<div class="cmb" style="left:1300px;top:736.75px;width:132px;height:20.5px;padding-left:3px"><span style="display:block;overflow:hidden;width:106px">Centre</span></div><div class="a" style="left:1414px;top:739.25px;width:16px;height:16px;border-radius:4px;background:#1b7bf6"><svg width="16" height="16" style="position:absolute;left:0;top:0"><path d="M5,6.5 L8,3.5 L11,6.5 M5,9.5 L8,12.5 L11,9.5" stroke="#fff" stroke-width="1.5" fill="none" stroke-linecap="round" stroke-linejoin="round"/></svg></div>
<div class="lbl" style="right:203.5px;top:763.5px;">Vertical :</div>
<div class="cmb" style="left:1300px;top:760.75px;width:132px;height:20.5px;padding-left:3px"><span style="display:block;overflow:hidden;width:106px">Milieu</span></div><div class="a" style="left:1414px;top:763.25px;width:16px;height:16px;border-radius:4px;background:#1b7bf6"><svg width="16" height="16" style="position:absolute;left:0;top:0"><path d="M5,6.5 L8,3.5 L11,6.5 M5,9.5 L8,12.5 L11,9.5" stroke="#fff" stroke-width="1.5" fill="none" stroke-linecap="round" stroke-linejoin="round"/></svg></div>
<div class="lbl" style="left:1177.5px;top:655px;font-weight:bold">Position du texte</div>
<div class="lbl" style="left:1177.5px;top:719px;font-weight:bold">Alignement</div>
<div class="a" style="left:1455px;top:107px;width:45px;height:691px;background:linear-gradient(90deg,#f0f0f0,#e0e0e0 55%,#c8c8c8)"></div>
<div class="hdots" style="left:1462px;top:116px;width:28px"></div>
<div class="a" style="left:1456px;top:120.5px;width:42.5px;height:42px;border-radius:5px;background:#b3b3b3"></div>
<div class="a" style="left:1456px;top:269px;width:42.5px;height:42px;border-radius:5px;background:#b3b3b3"></div>
<div class="a" style="left:1456px;top:418.5px;width:42.5px;height:42px;border-radius:5px;background:#b3b3b3"></div>
<div class="a" style="left:1457px;top:260.5px;width:43px;height:1px;background:repeating-linear-gradient(90deg,#555 0 1px,transparent 1px 3px)"></div>
<div class="a" style="left:1457px;top:409.5px;width:43px;height:1px;background:repeating-linear-gradient(90deg,#555 0 1px,transparent 1px 3px)"></div>
<svg class="a" style="left:1463px;top:127px" width="28" height="29" viewBox="0 0 28 29"><rect x=".5" y=".5" width="26.5" height="27" fill="#fff" stroke="#222" stroke-width="1"/><rect x="0" y="0" width="27.5" height="4.2" fill="#000"/><rect x="1.5" y="1" width="2.8" height="2.8" fill="#fff"/><path d="M7,13 L12,10 L12,21 L7,24 Z" fill="#999" stroke="#333" stroke-width=".7"/><path d="M10,12 L23,8 L23,19 L10,23 Z" fill="#f4f4f4" stroke="#333" stroke-width=".7"/><path d="M14,20 L20,11 L19,19" stroke="#e02020" stroke-width="1" fill="none"/></svg>
<svg class="a" style="left:1463px;top:174px" width="28" height="29" viewBox="0 0 28 29"><rect x=".5" y=".5" width="26.5" height="27" fill="#fff" stroke="#222" stroke-width="1"/><rect x="0" y="0" width="27.5" height="4.2" fill="#000"/><rect x="1.5" y="1" width="2.8" height="2.8" fill="#fff"/><rect x="7" y="9" width="11" height="9" fill="#fdf0c0" stroke="#444" stroke-width=".8"/><circle cx="16.5" cy="17" r="4.5" fill="#fdf0c0" fill-opacity=".8" stroke="#444" stroke-width=".8"/></svg>
<svg class="a" style="left:1463px;top:220px" width="28" height="29" viewBox="0 0 28 29"><rect x=".5" y=".5" width="26.5" height="27" fill="#fff" stroke="#222" stroke-width="1"/><rect x="0" y="0" width="27.5" height="4.2" fill="#000"/><rect x="1.5" y="1" width="2.8" height="2.8" fill="#fff"/><rect x="5" y="12" width="17" height="10" rx="2" fill="#f4f4f4" stroke="#b8c8e0" stroke-width="1"/></svg>
<svg class="a" style="left:1463px;top:276px" width="28" height="29" viewBox="0 0 28 29"><rect x=".5" y=".5" width="26.5" height="27" fill="#fff" stroke="#222" stroke-width="1"/><rect x="0" y="0" width="27.5" height="4.2" fill="#000"/><rect x="1.5" y="1" width="2.8" height="2.8" fill="#fff"/><rect x="3" y="9" width="4" height="3" fill="#000"/><rect x="3" y="15" width="4" height="3" fill="#000"/><rect x="3" y="21" width="4" height="3" fill="#000"/><rect x="9.5" y="9" width="14.5" height="3" fill="#fff" stroke="#333" stroke-width=".8"/><rect x="9.5" y="15" width="14.5" height="3" fill="#fff" stroke="#333" stroke-width=".8"/><rect x="9.5" y="21" width="14.5" height="3" fill="#fff" stroke="#333" stroke-width=".8"/></svg>
<svg class="a" style="left:1463px;top:323px" width="28" height="29" viewBox="0 0 28 29"><rect x=".5" y=".5" width="26.5" height="27" fill="#fff" stroke="#222" stroke-width="1"/><rect x="0" y="0" width="27.5" height="4.2" fill="#000"/><rect x="1.5" y="1" width="2.8" height="2.8" fill="#fff"/><path d="M6,10 L21,10 L15,17 L15,24 L12,22 L12,17 Z" fill="#ddd" stroke="#555" stroke-width=".8"/></svg>
<svg class="a" style="left:1463px;top:369px" width="28" height="29" viewBox="0 0 28 29"><rect x=".5" y=".5" width="26.5" height="27" fill="#fff" stroke="#222" stroke-width="1"/><rect x="0" y="0" width="27.5" height="4.2" fill="#000"/><rect x="1.5" y="1" width="2.8" height="2.8" fill="#fff"/><path d="M6,10 L11,14 L11,21 L6,25 Z M11,14 L21,14 L21,21 L11,21" fill="#f4f4f4" stroke="#555" stroke-width=".8"/><path d="M2,17.5 L25,17.5" stroke="#f08080" stroke-width=".8" stroke-dasharray="2 1"/></svg>
<svg class="a" style="left:1463px;top:425px" width="28" height="29" viewBox="0 0 28 29"><rect x=".5" y=".5" width="26.5" height="27" fill="#fff" stroke="#222" stroke-width="1"/><rect x="0" y="0" width="27.5" height="4.2" fill="#000"/><rect x="1.5" y="1" width="2.8" height="2.8" fill="#fff"/><path d="M2.5,8.5 L16,8.5 M2.5,11.8 L13,11.8 M2.5,15.1 L14,15.1 M2.5,18.4 L16,18.4" stroke="#777" stroke-width=".7" stroke-dasharray="1.6 .6"/><path d="M0.5,21.5 L27,21.5" stroke="#222" stroke-width=".8"/><path d="M3,24.5 L5,23 M3,24.5 L5,26 M10,24.5 L25,24.5" stroke="#333" stroke-width=".8"/></svg>
<svg class="a" style="left:1463px;top:472px" width="28" height="29" viewBox="0 0 28 29"><rect x=".5" y=".5" width="26.5" height="27" fill="#fff" stroke="#222" stroke-width="1"/><rect x="0" y="0" width="27.5" height="4.2" fill="#000"/><rect x="1.5" y="1" width="2.8" height="2.8" fill="#fff"/><rect x="7.5" y="9" width="13" height="14.5" rx="1.5" fill="#c89030" stroke="#9a6a20" stroke-width=".6"/><rect x="9.2" y="11" width="9.6" height="11" fill="#f2f2f2"/><path d="M10.5,14 L17.5,14 M10.5,16.5 L17.5,16.5 M10.5,19 L15.5,19" stroke="#ccc" stroke-width=".7"/><rect x="11" y="7.5" width="6" height="3.5" rx=".8" fill="#9a9a9a"/></svg>
<div class="a" style="left:0;top:798px;width:1500px;height:46px;background:#dcdcdc"></div>
<div class="t" style="left:2px;top:808px;font-size:10.3px;color:#111">289.8922,46.6177</div>
<div class="t" style="left:2px;top:828.5px;font-size:10.3px;color:#111">@289.8922,46.6177</div>
<div class="a" style="left:253.5px;top:802px;width:1px;height:40px;background:#999"></div>
<div class="t" style="left:256px;top:808px;font-size:10.3px;color:#111">293.6166&lt;9°</div>
<div class="t" style="left:256px;top:828.5px;font-size:10.3px;color:#111">@293.6166&lt;9°</div>
<div class="a" style="left:506px;top:819px;width:6px;height:6px;border-radius:3px;background:#c4c4c4"></div>
<div class="t" style="right:801px;top:812px;font-size:10.25px;color:#111;text-align:right;line-height:11px">Sélectionne une entité ou une région<br>Déplacer l’entité ou la référence</div>
<svg class="a" style="left:716px;top:806px" width="20" height="30"><rect x="1" y="1" width="18" height="27" rx="9" fill="#fff" stroke="#333" stroke-width="1"/><path d="M1,13 L19,13 M10,1 L10,13" stroke="#333" stroke-width="1"/><rect x="8" y="4" width="4" height="7" rx="2" fill="#fff" stroke="#333" stroke-width="1"/></svg>
<div class="a" style="left:939px;top:819px;width:6px;height:6px;border-radius:3px;background:#c4c4c4"></div>
<div class="t" style="left:949px;top:812px;font-size:10.25px;color:#111;line-height:11px">Entités sélectionnées :<br>149 entités sur calque "0".</div>
<div class="a" style="left:1269px;top:819px;width:6px;height:6px;border-radius:3px;background:#c4c4c4"></div>
<div class="a" style="left:574px;top:29.5px;width:330px;height:524.5px;background:#ececec;border-radius:6px;box-shadow:0 0 0 .5px rgba(0,0,0,.08),0 2px 5px rgba(0,0,0,.12)"></div>
<div class="a" style="left:574px;top:270px;width:330px;height:20px;background:#f1c9c9"></div>
<div class="a" style="left:562px;top:269.2px;width:352px;height:1.6px;background:linear-gradient(90deg,rgba(240,110,110,0),#f28080 4%,#f28080 96%,rgba(240,110,110,0))"></div>
<div class="a" style="left:562px;top:289px;width:352px;height:1.6px;background:linear-gradient(90deg,rgba(240,110,110,0),#f28080 4%,#f28080 96%,rgba(240,110,110,0))"></div>
<div class="a" style="left:573.5px;top:270px;width:1.2px;height:20px;background:#f28080"></div>
<div class="a" style="left:903px;top:270px;width:1.2px;height:20px;background:#f28080"></div>
<div class="a" style="left:574px;top:119px;width:330px;height:2px;background:#d5d5d5"></div>
<div class="a" style="left:574px;top:211px;width:330px;height:2px;background:#d5d5d5"></div>
<div class="a" style="left:574px;top:263px;width:330px;height:2px;background:#d5d5d5"></div>
<div class="a" style="left:574px;top:315px;width:330px;height:2px;background:#d5d5d5"></div>
<div class="a" style="left:574px;top:367px;width:330px;height:2px;background:#d5d5d5"></div>
<div class="a" style="left:574px;top:399px;width:330px;height:2px;background:#d5d5d5"></div>
<div class="a" style="left:574px;top:471px;width:330px;height:2px;background:#d5d5d5"></div>
<div class="a" style="left:574px;top:523.5px;width:330px;height:2px;background:#d5d5d5"></div>
<div class="t" style="left:614px;top:35.0px;font-size:13.5px;line-height:16px;color:#222">Permuter visibilité (YV)</div>
<svg class="a" style="left:594px;top:36px" width="16" height="18" viewBox="0 0 16 18"><defs><linearGradient id="e1g" x1="0" x2="1"><stop offset="0" stop-color="#9a9a9a"/><stop offset=".45" stop-color="#707070"/><stop offset=".55" stop-color="#000"/></linearGradient></defs><path d="M0.5,9.5 C2,5 6,4 9,4 C12,4 15,6 15.5,8.5 C14,13 10,15 7,15 C4,15 1.5,12.5 0.5,9.5 Z" fill="url(#e1g)"/><path d="M3,9.5 C4,7 6.5,6.5 8,6.5 C10,6.5 12,7.5 12.5,9 C11.5,11.5 9.5,12.5 7.5,12.5 C5.5,12.5 3.8,11.5 3,9.5 Z" fill="#fff"/><path d="M5.5,10 L7.5,12 L13,5.5" stroke="#000" stroke-width="2" fill="none"/></svg>
<div class="t" style="left:614px;top:55.0px;font-size:13.5px;line-height:16px;color:#222">Permuter l'état gelé (YF)</div>
<svg class="a" style="left:594px;top:56px" width="16" height="18" viewBox="0 0 16 18"><path d="M9.5,4 L14.5,9 M13,14.5 L14,16 M4,14 L2.5,15.5 M9,15 L9,17 M15,11 L16,11" stroke="#e8c040" stroke-width=".8"/><path d="M10,13 A4.5,4.5 0 0 0 13.5,9 L9,8.5 Z" fill="#f4c000"/><path d="M8.5,2 L9,6.5 L13,5 L9.5,8.5 L10,12.5 L7,9.5 L2,11 L6,8 L3,4.5 L7,6 Z" fill="#60d0f8"/><circle cx="11.5" cy="10.5" r="3" fill="#f4c000"/><path d="M7,7 L12,12 L7,12 Z" fill="#60d0f8" opacity="0"/></svg>
<div class="t" style="left:614px;top:75.0px;font-size:13.5px;line-height:16px;color:#222">Permuter verrou (YL)</div>
<svg class="a" style="left:594px;top:76px" width="16" height="18" viewBox="0 0 16 18"><defs><linearGradient id="l1g" x1="0" y1="0" x2="0" y2="1"><stop offset="0" stop-color="#f8f8f8"/><stop offset="1" stop-color="#888"/></linearGradient></defs><path d="M4.5,9 L4.5,6.5 A3.5,3.5 0 0 1 11.5,6.5 L11.5,9" fill="none" stroke="#555" stroke-width="1.3"/><path d="M3.5,9 L12.5,9 L12.5,16 L3.5,16 Z" fill="url(#l1g)"/><path d="M3.5,16 L12.5,10 L12.5,16 Z" fill="#000"/></svg>
<div class="t" style="left:614px;top:95.0px;font-size:13.5px;line-height:16px;color:#222">Afficher uniquement de l'actif (YO)</div>
<svg class="a" style="left:594px;top:96px" width="16" height="18" viewBox="0 0 16 18"><path d="M0.5,7 C3,2.5 12,2 15,6.5 C12.5,11.5 4,12 0.5,7 Z" fill="#000"/><ellipse cx="7.8" cy="7" rx="4.6" ry="3.2" fill="#fff"/><circle cx="8" cy="6.5" r="2.4" fill="#000"/><rect x="5" y="12.8" width="9" height="1.4" fill="#1010e0"/><rect x="5" y="14.2" width="9" height="2.3" fill="#fafafa" stroke="#ccc" stroke-width=".4"/></svg>
<div class="t" style="left:614px;top:127.0px;font-size:13.5px;line-height:16px;color:#222">Afficher tous les calques (YS)</div>
<svg class="a" style="left:594px;top:128px" width="16" height="18" viewBox="0 0 16 18"><path d="M1,8 C4,3 12,2 15,7 C12,13 4,13 1,8 Z" fill="#000"/><ellipse cx="8" cy="8" rx="4.5" ry="3.2" fill="#fff"/><circle cx="8.5" cy="7.5" r="2.6" fill="#000"/></svg>
<div class="t" style="left:614px;top:147.0px;font-size:13.5px;line-height:16px;color:#222">Masquer tous les calques (YH)</div>
<svg class="a" style="left:594px;top:148px" width="16" height="18" viewBox="0 0 16 18"><path d="M1,8 C4,3 12,2 15,7 C12,13 4,13 1,8 Z" fill="#999"/><ellipse cx="8" cy="8" rx="4.5" ry="3.2" fill="#fff"/><circle cx="8.5" cy="7.5" r="2.6" fill="#999"/></svg>
<div class="t" style="left:614px;top:167.0px;font-size:13.5px;line-height:16px;color:#222">Dégeler tous les calques (YW)</div>
<svg class="a" style="left:594px;top:168px" width="16" height="18" viewBox="0 0 16 18"><path d="M1,8 C4,3 12,2 15,7 C12,13 4,13 1,8 Z" fill="#000"/><ellipse cx="8" cy="8" rx="4.5" ry="3.2" fill="#fff"/><circle cx="8.5" cy="7.5" r="2.6" fill="#000"/></svg>
<div class="t" style="left:614px;top:187.0px;font-size:13.5px;line-height:16px;color:#222">Geler tous les calques (YZ)</div>
<svg class="a" style="left:594px;top:188px" width="16" height="18" viewBox="0 0 16 18"><path d="M8,2 L8,14 M3,5 L13,11 M13,5 L3,11" stroke="#40b8f0" stroke-width="2.2"/></svg>
<div class="t" style="left:614px;top:219.0px;font-size:13.5px;line-height:16px;color:#222">Verrouiller tous les calques (YK)</div>
<svg class="a" style="left:594px;top:220px" width="16" height="18" viewBox="0 0 16 18"><path d="M5,8 L5,5.5 A3,3 0 0 1 11,5.5 L11,8" fill="none" stroke="#111" stroke-width="1.5"/><rect x="4" y="8" width="8" height="7" rx="1" fill="#111"/></svg>
<div class="t" style="left:614px;top:239.0px;font-size:13.5px;line-height:16px;color:#222">Déverrouiller tous les calques (YN)</div>
<svg class="a" style="left:594px;top:240px" width="16" height="18" viewBox="0 0 16 18"><path d="M5,8 L5,5.5 A3,3 0 0 1 11,5.5 L11,8" fill="none" stroke="#999" stroke-width="1.5"/><rect x="4" y="8" width="8" height="7" rx="1" fill="#999"/></svg>
<div class="t" style="left:614px;top:271.2px;font-size:13.5px;line-height:16px;color:#222">Ajouter un calque (YA)</div>
<svg class="a" style="left:594px;top:272px" width="16" height="18" viewBox="0 0 16 18"><path d="M8,2 L8,14 M2,8 L14,8" stroke="#e01010" stroke-width="3"/></svg>
<div class="t" style="left:614px;top:291.0px;font-size:13.5px;line-height:16px;color:#222">Ajouter sous-calque (YU)</div>
<svg class="a" style="left:594px;top:292px" width="16" height="18" viewBox="0 0 16 18"><path d="M2,2 L2,7 L6,7" stroke="#555" stroke-width="1" fill="none"/><path d="M10,6 L10,15 M6,10.5 L14,10.5" stroke="#e01010" stroke-width="2.6"/></svg>
<div class="t" style="left:614px;top:323.0px;font-size:13.5px;line-height:16px;color:#222">Créer un calque à partir de la sélection (YT)</div>
<svg class="a" style="left:594px;top:324px" width="16" height="18" viewBox="0 0 16 18"><path d="M2,4 L8,2 L8,10 L2,12 Z" fill="#fff" stroke="#999" stroke-width=".8"/><path d="M3,9 L7,4" stroke="#f06060" stroke-width=".8"/><path d="M11,6 L11,15 M7,10.5 L15,10.5" stroke="#e01010" stroke-width="2.6"/></svg>
<div class="t" style="left:614px;top:343.2px;font-size:13.5px;line-height:16px;color:#222">Déplacer la sélection sur le calque actuel (YJ)</div>
<svg class="a" style="left:594px;top:344px" width="16" height="18" viewBox="0 0 16 18"><path d="M1,6 L8,3 L8,13 L1,15 Z" fill="#eef" stroke="#3040a0" stroke-width=".9"/><path d="M7,5 L15,2 L15,12 L7,14 Z" fill="#fff" stroke="#3040a0" stroke-width=".9"/><path d="M9,12 L13,5 L13,11" stroke="#e02020" stroke-width=".9" fill="none"/><path d="M3,12 L6,7" stroke="#3050d0" stroke-width="1"/></svg>
<div class="t" style="left:614px;top:375.2px;font-size:13.5px;line-height:16px;color:#222">Dupliquer le calque (YY)</div>
<svg class="a" style="left:594px;top:376px" width="16" height="18" viewBox="0 0 16 18"><path d="M1,6 L8,3 L8,14 L1,16 Z" fill="#ddd" stroke="#444" stroke-width=".8"/><path d="M5,5 L14,2 L14,12 L5,15 Z" fill="#fff" stroke="#444" stroke-width=".8"/><path d="M8,12 L12,5 L12,11" stroke="#e02020" stroke-width=".9" fill="none"/></svg>
<div class="t" style="left:614px;top:407.2px;font-size:13.5px;line-height:16px;color:#222">Supprimer calque(s) (YR)</div>
<svg class="a" style="left:594px;top:408px" width="16" height="18" viewBox="0 0 16 18"><rect x="1.5" y="7" width="13" height="3" fill="#d81818"/></svg>
<div class="t" style="left:614px;top:427.1px;font-size:13.5px;line-height:16px;color:#222">Supprimer les calques inutilisés (YP)</div>
<svg class="a" style="left:594px;top:428px" width="16" height="18" viewBox="0 0 16 18"><path d="M2,8 L8,4 L14,12 L9,15 Z" fill="#f4f4f4" stroke="#888" stroke-width=".8"/><path d="M1,7 L6,3 L8,6 L3,10 Z" fill="#f0c020"/><path d="M9,15 L14,12" stroke="#444" stroke-width="1.2"/></svg>
<div class="t" style="left:614px;top:447.1px;font-size:13.5px;line-height:16px;color:#222">Modifier le calque (YE)</div>
<svg class="a" style="left:594px;top:448px" width="16" height="18" viewBox="0 0 16 18"><path d="M2,15 L3,11 L13,1 L16,4 L6,14 Z" fill="#f0a830" stroke="#7a4a10" stroke-width=".8"/><path d="M2,15 L3,12 L5,14Z" fill="#333"/></svg>
<div class="t" style="left:614px;top:478.8px;font-size:13.5px;line-height:16px;color:#222">Sélectionner entités de calque (YC)</div>
<svg class="a" style="left:594px;top:480px" width="16" height="18" viewBox="0 0 16 18"><path d="M1,6 L8,3 L8,14 L1,16 Z" fill="#ccc" stroke="#444" stroke-width=".8"/><path d="M5,5 L14,2 L14,12 L5,15 Z" fill="#fff" stroke="#444" stroke-width=".8"/><path d="M8,12 L12,5 L12,11" stroke="#e02020" stroke-width=".9" fill="none"/></svg>
<div class="t" style="left:614px;top:499.0px;font-size:13.5px;line-height:16px;color:#222">Désélectionner entités de calque (YD)</div>
<svg class="a" style="left:594px;top:500px" width="16" height="18" viewBox="0 0 16 18"><path d="M1,6 L8,3 L8,14 L1,16 Z" fill="#ccc" stroke="#444" stroke-width=".8"/><path d="M5,5 L14,2 L14,12 L5,15 Z" fill="#fff" stroke="#444" stroke-width=".8"/><path d="M8,12 L12,5 L12,11" stroke="#888" stroke-width=".9" fill="none"/></svg>
<div class="t" style="left:614px;top:531.1px;font-size:13.5px;line-height:16px;color:#222">État des calques</div>
<svg class="a" style="left:882px;top:533px" width="10" height="11"><path d="M0,0 L10,5.5 L0,11 Z" fill="#111"/></svg>
<div class="a" style="left:1327px;top:438.5px;width:78px;height:78px;border-radius:50%;border:4px solid rgba(115,145,180,.4);box-shadow:0 0 2px 1px rgba(115,145,180,.3), inset 0 0 2px 1px rgba(115,145,180,.3), inset 0 0 5px 3px rgba(255,255,255,.45)"></div>
<svg class="a" style="left:1365.5px;top:477.5px" width="20" height="30"><g transform="translate(1,1) scale(1.27)"><path d="M0,0 L0,17.3 L3.9,13.6 L6.8,20.8 L9.2,19.8 L6.3,12.6 L12.2,12 Z" fill="#fff" stroke="#000" stroke-width="0.7874015748031495" stroke-linejoin="round"/></g></svg>
</div></body></html>
